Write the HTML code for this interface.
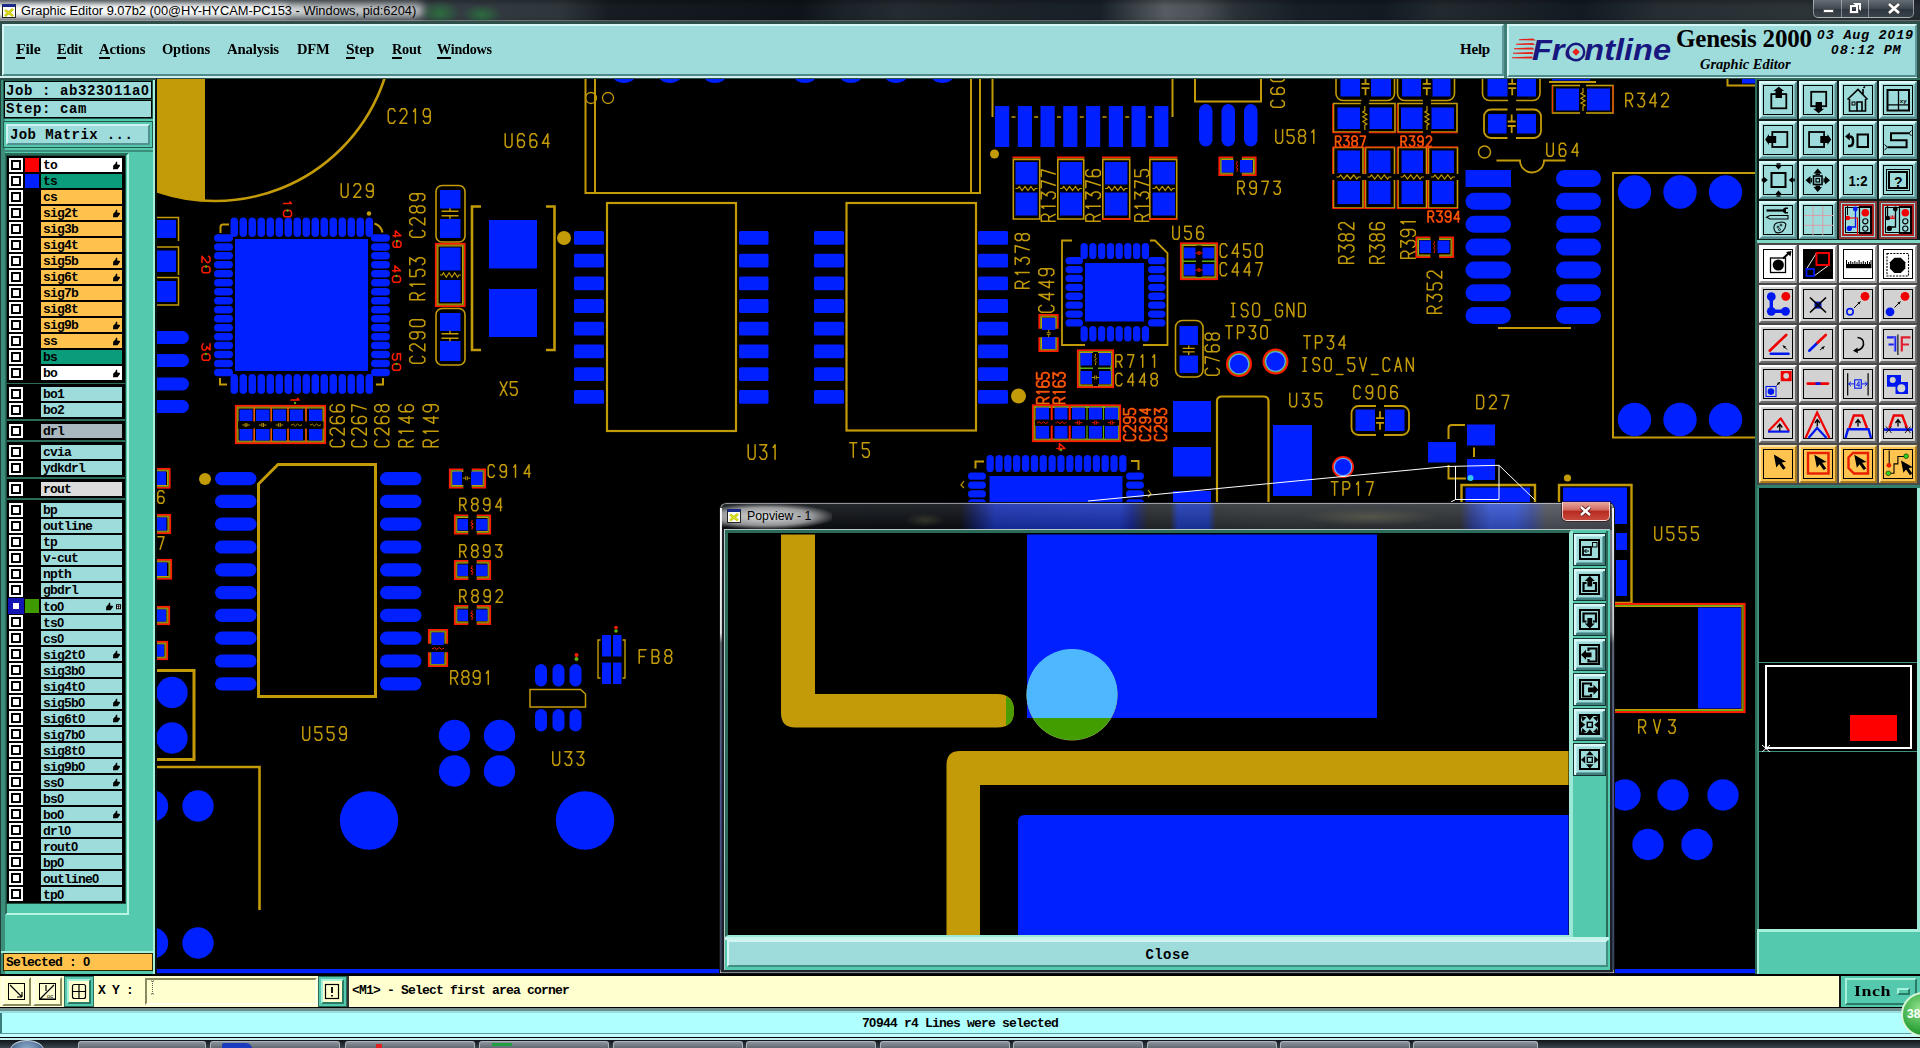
<!DOCTYPE html>
<html><head><meta charset="utf-8"><title>Graphic Editor</title><style>
html,body{margin:0;padding:0;background:#000;}
body{width:1920px;height:1048px;position:relative;overflow:hidden;font-family:'Liberation Sans', sans-serif;}
div{position:absolute;box-sizing:border-box;}
svg{position:absolute;left:0;top:0;}
.m{font-family:'Liberation Mono', monospace;font-weight:bold;color:#000;white-space:pre;}
.s{font-family:'Liberation Serif', serif;font-weight:bold;color:#000;white-space:pre;}
.row{left:7px;width:118px;height:16px;background:#000;}
.cb{left:2px;top:1px;width:14px;height:14px;background:#fff;border:2px solid #fff;}
.cb i{position:absolute;left:0;top:0;width:10px;height:10px;border:2px solid #000;box-sizing:border-box;display:block;}
.cc{left:18px;top:1px;width:14px;height:14px;}
.nm{left:34px;top:1px;width:81px;height:14px;font-family:'Liberation Mono', monospace;font-weight:bold;font-size:13px;letter-spacing:-0.8px;line-height:13px;padding-left:2px;padding-top:1px;color:#000;white-space:pre;overflow:hidden;}
.tb{width:38px;height:38px;background:#9edbdb;border-style:solid;border-width:2px;border-color:#dcfafa #5a8e8e #5a8e8e #dcfafa;box-shadow:inset 1px 1px 0 #c4eeee,inset -1px -1px 0 #7ab4b4;}
.tb b{position:absolute;left:2px;top:2px;width:30px;height:30px;border:1px solid #000;display:block;box-sizing:border-box;}
.gb{width:38px;height:38px;background:#d2d2d2;border-style:solid;border-width:2px;border-color:#fff #6a6a6a #6a6a6a #fff;}
.gb b{position:absolute;left:2px;top:2px;width:30px;height:30px;border:1px solid #000;display:block;box-sizing:border-box;}
.wb{width:38px;height:38px;background:#fff;border-style:solid;border-width:2px;border-color:#fff #9a9a9a #9a9a9a #fff;}
.wb b{position:absolute;left:2px;top:2px;width:30px;height:30px;border:1px solid #000;display:block;box-sizing:border-box;}
.ob{width:38px;height:38px;background:#ffc44f;border-style:solid;border-width:2px;border-color:#ffe6a8 #a87a20 #a87a20 #ffe6a8;}
.ob b{position:absolute;left:2px;top:2px;width:30px;height:30px;border:1px solid #000;display:block;box-sizing:border-box;}
.rb{width:38px;height:38px;background:#9edbdb;border:2px solid #8a3a3a;}
.rb b{position:absolute;left:1px;top:1px;width:32px;height:32px;border:2px solid #b02020;display:block;box-sizing:border-box;}
.pb{width:33px;height:33px;background:#9edbdb;border:1px solid #16332e;box-shadow:inset 2px 2px 0 #d8f8f8,inset -2px -2px 0 #3f7f7f,inset 3px 3px 0 #b8e8e8,inset -3px -3px 0 #6aa8a8;}
.pb b{position:absolute;left:5px;top:5px;width:21px;height:21px;border:2px solid #000;display:block;box-sizing:border-box;}
</style></head><body>
<svg width="1920" height="1048" viewBox="0 0 1920 1048" style="left:0;top:0" shape-rendering="geometricPrecision"><defs><clipPath id="pc"><rect x="157" y="79" width="1598.5" height="896"/></clipPath></defs><g clip-path="url(#pc)"><path d="M157 70 H205 V200.7 A178.5 178.5 0 0 1 157 191.5 Z" stroke="#c39b08" stroke-width="0" fill="#c39b08" />
<circle cx="215" cy="22.5" r="178.5" stroke="#c39b08" stroke-width="2.6" fill="none"/>
<path d="M6.9 2.4 L5.2 0 L1.7 0 L0 2.4 L0 12.1 L1.7 14.5 L5.2 14.5 L6.9 12.1 M11.7 2.4 L13.4 0 L16.9 0 L18.6 2.4 L18.6 5.3 L11.7 14.5 L18.6 14.5 M25.3 2.7 L27.2 0 L27.2 14.5 M42 5.8 L40.3 8 L36.8 8 L35.1 5.8 L35.1 2.4 L36.8 0 L40.3 0 L42 2.4 L42 12.1 L40.3 14.5 L36.8 14.5 L35.1 12.1" transform="translate(388.2 108.8)" stroke="#c39b08" stroke-width="1.5" fill="none" stroke-linejoin="round" stroke-linecap="round"/>
<path d="M0 0 L0 11.2 L1.7 13.5 L5.1 13.5 L6.8 11.2 L6.8 0 M19.2 2.2 L17.5 0 L14.1 0 L12.4 2.2 L12.4 11.2 L14.1 13.5 L17.5 13.5 L19.2 11.2 L19.2 8.1 L17.5 6.1 L14.1 6.1 L12.4 8.1 M31.6 2.2 L29.9 0 L26.5 0 L24.8 2.2 L24.8 11.2 L26.5 13.5 L29.9 13.5 L31.6 11.2 L31.6 8.1 L29.9 6.1 L26.5 6.1 L24.8 8.1 M42.6 13.5 L42.6 0 L37.2 9.5 L44 9.5" transform="translate(505.2 133.8)" stroke="#c39b08" stroke-width="1.5" fill="none" stroke-linejoin="round" stroke-linecap="round"/>
<path d="M0 0 L0 11.2 L1.7 13.5 L5.1 13.5 L6.8 11.2 L6.8 0 M12.6 2.2 L14.3 0 L17.7 0 L19.4 2.2 L19.4 5 L12.6 13.5 L19.4 13.5 M32 5.4 L30.3 7.4 L26.9 7.4 L25.2 5.4 L25.2 2.2 L26.9 0 L30.3 0 L32 2.2 L32 11.2 L30.3 13.5 L26.9 13.5 L25.2 11.2" transform="translate(341.2 183.8)" stroke="#c39b08" stroke-width="1.5" fill="none" stroke-linejoin="round" stroke-linecap="round"/>
<path d="M6.9 2.5 L5.2 0 L1.7 0 L0 2.5 L0 12.5 L1.7 15 L5.2 15 L6.9 12.5 M12.2 2.5 L13.9 0 L17.4 0 L19.1 2.5 L19.1 5.5 L12.2 15 L19.1 15 M26.1 0 L29.6 0 L31.3 2.5 L31.3 5 L29.6 7 L26.1 7 L24.4 5 L24.4 2.5 L26.1 0 M26.1 7 L24.4 9.2 L24.4 12.5 L26.1 15 L29.6 15 L31.3 12.5 L31.3 9.2 L29.6 7 M43.5 6 L41.8 8.2 L38.3 8.2 L36.6 6 L36.6 2.5 L38.3 0 L41.8 0 L43.5 2.5 L43.5 12.5 L41.8 15 L38.3 15 L36.6 12.5" transform="translate(409.8 237.2) rotate(-90)" stroke="#c39b08" stroke-width="1.5" fill="none" stroke-linejoin="round" stroke-linecap="round"/>
<path d="M0 15 L0 0 L5.2 0 L6.9 2.5 L6.9 5.5 L5.2 8 L0 8 M3.5 8 L6.9 15 M13.6 2.8 L15.5 0 L15.5 15 M30.3 0 L23.4 0 L23.4 6.2 L28.6 6.2 L30.3 8.8 L30.3 12.5 L28.6 15 L25.1 15 L23.4 12.5 M35.1 0 L42 0 L38.2 6.2 L40.3 6.2 L42 8.8 L42 12.5 L40.3 15 L36.8 15 L35.1 12.5" transform="translate(409.8 299.8) rotate(-90)" stroke="#c39b08" stroke-width="1.5" fill="none" stroke-linejoin="round" stroke-linecap="round"/>
<path d="M6.9 2.5 L5.2 0 L1.7 0 L0 2.5 L0 12.5 L1.7 15 L5.2 15 L6.9 12.5 M12.2 2.5 L13.9 0 L17.4 0 L19.1 2.5 L19.1 5.5 L12.2 15 L19.1 15 M31.3 6 L29.6 8.2 L26.1 8.2 L24.4 6 L24.4 2.5 L26.1 0 L29.6 0 L31.3 2.5 L31.3 12.5 L29.6 15 L26.1 15 L24.4 12.5 M38.3 0 L41.8 0 L43.5 2.5 L43.5 12.5 L41.8 15 L38.3 15 L36.6 12.5 L36.6 2.5 L38.3 0" transform="translate(409.8 363.2) rotate(-90)" stroke="#c39b08" stroke-width="1.5" fill="none" stroke-linejoin="round" stroke-linecap="round"/>
<rect x="157" y="220" width="19" height="18" fill="#0020ff"/>
<rect x="157" y="250.5" width="19" height="21.5" fill="#0020ff"/>
<rect x="157" y="281" width="19" height="21" fill="#0020ff"/>
<path d="M157 217.5 H178.5 V241 M157 247 H178.5 V275 M157 277.5 H178.5 V305 H157" stroke="#c39b08" stroke-width="1.5" fill="none" />
<rect x="150" y="331" width="39" height="13" rx="6.5" fill="#0020ff"/>
<rect x="150" y="354" width="39" height="13" rx="6.5" fill="#0020ff"/>
<rect x="150" y="377.5" width="39" height="13" rx="6.5" fill="#0020ff"/>
<rect x="150" y="400" width="39" height="13" rx="6.5" fill="#0020ff"/>
<rect x="235" y="239" width="133" height="132" fill="#0020ff"/>
<rect x="230.5" y="217.5" width="7.5" height="19.5" rx="3.8" fill="#0020ff"/>
<rect x="230.5" y="374" width="7.5" height="20" rx="3.8" fill="#0020ff"/>
<rect x="239.5" y="217.5" width="7.5" height="19.5" rx="3.8" fill="#0020ff"/>
<rect x="239.5" y="374" width="7.5" height="20" rx="3.8" fill="#0020ff"/>
<rect x="248.5" y="217.5" width="7.5" height="19.5" rx="3.8" fill="#0020ff"/>
<rect x="248.5" y="374" width="7.5" height="20" rx="3.8" fill="#0020ff"/>
<rect x="257.5" y="217.5" width="7.5" height="19.5" rx="3.8" fill="#0020ff"/>
<rect x="257.5" y="374" width="7.5" height="20" rx="3.8" fill="#0020ff"/>
<rect x="266.5" y="217.5" width="7.5" height="19.5" rx="3.8" fill="#0020ff"/>
<rect x="266.5" y="374" width="7.5" height="20" rx="3.8" fill="#0020ff"/>
<rect x="275.5" y="217.5" width="7.5" height="19.5" rx="3.8" fill="#0020ff"/>
<rect x="275.5" y="374" width="7.5" height="20" rx="3.8" fill="#0020ff"/>
<rect x="284.5" y="217.5" width="7.5" height="19.5" rx="3.8" fill="#0020ff"/>
<rect x="284.5" y="374" width="7.5" height="20" rx="3.8" fill="#0020ff"/>
<rect x="293.5" y="217.5" width="7.5" height="19.5" rx="3.8" fill="#0020ff"/>
<rect x="293.5" y="374" width="7.5" height="20" rx="3.8" fill="#0020ff"/>
<rect x="302.5" y="217.5" width="7.5" height="19.5" rx="3.8" fill="#0020ff"/>
<rect x="302.5" y="374" width="7.5" height="20" rx="3.8" fill="#0020ff"/>
<rect x="311.5" y="217.5" width="7.5" height="19.5" rx="3.8" fill="#0020ff"/>
<rect x="311.5" y="374" width="7.5" height="20" rx="3.8" fill="#0020ff"/>
<rect x="320.5" y="217.5" width="7.5" height="19.5" rx="3.8" fill="#0020ff"/>
<rect x="320.5" y="374" width="7.5" height="20" rx="3.8" fill="#0020ff"/>
<rect x="329.5" y="217.5" width="7.5" height="19.5" rx="3.8" fill="#0020ff"/>
<rect x="329.5" y="374" width="7.5" height="20" rx="3.8" fill="#0020ff"/>
<rect x="338.5" y="217.5" width="7.5" height="19.5" rx="3.8" fill="#0020ff"/>
<rect x="338.5" y="374" width="7.5" height="20" rx="3.8" fill="#0020ff"/>
<rect x="347.5" y="217.5" width="7.5" height="19.5" rx="3.8" fill="#0020ff"/>
<rect x="347.5" y="374" width="7.5" height="20" rx="3.8" fill="#0020ff"/>
<rect x="356.5" y="217.5" width="7.5" height="19.5" rx="3.8" fill="#0020ff"/>
<rect x="356.5" y="374" width="7.5" height="20" rx="3.8" fill="#0020ff"/>
<rect x="365.5" y="217.5" width="7.5" height="19.5" rx="3.8" fill="#0020ff"/>
<rect x="365.5" y="374" width="7.5" height="20" rx="3.8" fill="#0020ff"/>
<rect x="214" y="234.2" width="19" height="7.5" rx="3.8" fill="#0020ff"/>
<rect x="371" y="234.2" width="19" height="7.5" rx="3.8" fill="#0020ff"/>
<rect x="214" y="243.2" width="19" height="7.5" rx="3.8" fill="#0020ff"/>
<rect x="371" y="243.2" width="19" height="7.5" rx="3.8" fill="#0020ff"/>
<rect x="214" y="252.1" width="19" height="7.5" rx="3.8" fill="#0020ff"/>
<rect x="371" y="252.1" width="19" height="7.5" rx="3.8" fill="#0020ff"/>
<rect x="214" y="261.1" width="19" height="7.5" rx="3.8" fill="#0020ff"/>
<rect x="371" y="261.1" width="19" height="7.5" rx="3.8" fill="#0020ff"/>
<rect x="214" y="270.1" width="19" height="7.5" rx="3.8" fill="#0020ff"/>
<rect x="371" y="270.1" width="19" height="7.5" rx="3.8" fill="#0020ff"/>
<rect x="214" y="279.1" width="19" height="7.5" rx="3.8" fill="#0020ff"/>
<rect x="371" y="279.1" width="19" height="7.5" rx="3.8" fill="#0020ff"/>
<rect x="214" y="288" width="19" height="7.5" rx="3.8" fill="#0020ff"/>
<rect x="371" y="288" width="19" height="7.5" rx="3.8" fill="#0020ff"/>
<rect x="214" y="297" width="19" height="7.5" rx="3.8" fill="#0020ff"/>
<rect x="371" y="297" width="19" height="7.5" rx="3.8" fill="#0020ff"/>
<rect x="214" y="306" width="19" height="7.5" rx="3.8" fill="#0020ff"/>
<rect x="371" y="306" width="19" height="7.5" rx="3.8" fill="#0020ff"/>
<rect x="214" y="314.9" width="19" height="7.5" rx="3.8" fill="#0020ff"/>
<rect x="371" y="314.9" width="19" height="7.5" rx="3.8" fill="#0020ff"/>
<rect x="214" y="323.9" width="19" height="7.5" rx="3.8" fill="#0020ff"/>
<rect x="371" y="323.9" width="19" height="7.5" rx="3.8" fill="#0020ff"/>
<rect x="214" y="332.9" width="19" height="7.5" rx="3.8" fill="#0020ff"/>
<rect x="371" y="332.9" width="19" height="7.5" rx="3.8" fill="#0020ff"/>
<rect x="214" y="341.8" width="19" height="7.5" rx="3.8" fill="#0020ff"/>
<rect x="371" y="341.8" width="19" height="7.5" rx="3.8" fill="#0020ff"/>
<rect x="214" y="350.8" width="19" height="7.5" rx="3.8" fill="#0020ff"/>
<rect x="371" y="350.8" width="19" height="7.5" rx="3.8" fill="#0020ff"/>
<rect x="214" y="359.8" width="19" height="7.5" rx="3.8" fill="#0020ff"/>
<rect x="371" y="359.8" width="19" height="7.5" rx="3.8" fill="#0020ff"/>
<rect x="214" y="368.8" width="19" height="7.5" rx="3.8" fill="#0020ff"/>
<rect x="371" y="368.8" width="19" height="7.5" rx="3.8" fill="#0020ff"/>
<path d="M220.5 233 V227 Q220.5 224.5 223 224.5 H229 M220 378 V384.5 H227 M383 378 V384.5 H376" stroke="#c39b08" stroke-width="2" fill="none" />
<path d="M374.5 223.5 Q381 225.5 382.5 232.5" stroke="#c39b08" stroke-width="2" fill="none" />
<circle cx="369" cy="213.5" r="2.2" fill="#c39b08"/>
<path d="M1.7 1.5 L3.4 0 L3.4 8 M11.9 0 L15 0 L16.5 1.3 L16.5 6.7 L15 8 L11.9 8 L10.3 6.7 L10.3 1.3 L11.9 0" transform="translate(291.5 200.2) rotate(90)" stroke="#ff1a00" stroke-width="1.5" fill="none" stroke-linejoin="round" stroke-linecap="round"/>
<circle cx="287.5" cy="210.5" r="1.2" fill="#5fae10"/>
<path d="M0 1.3 L1.6 0 L4.7 0 L6.2 1.3 L6.2 2.9 L0 8 L6.2 8 M11.9 0 L15 0 L16.5 1.3 L16.5 6.7 L15 8 L11.9 8 L10.3 6.7 L10.3 1.3 L11.9 0" transform="translate(210 256.2) rotate(90)" stroke="#ff1a00" stroke-width="1.5" fill="none" stroke-linejoin="round" stroke-linecap="round"/>
<circle cx="206" cy="266.5" r="1.2" fill="#5fae10"/>
<path d="M5 8 L5 0 L0 5.6 L6.2 5.6 M16.5 3.2 L15 4.4 L11.9 4.4 L10.3 3.2 L10.3 1.3 L11.9 0 L15 0 L16.5 1.3 L16.5 6.7 L15 8 L11.9 8 L10.3 6.7" transform="translate(401 230.8) rotate(90)" stroke="#ff1a00" stroke-width="1.5" fill="none" stroke-linejoin="round" stroke-linecap="round"/>
<circle cx="397" cy="241" r="1.2" fill="#5fae10"/>
<path d="M5 8 L5 0 L0 5.6 L6.2 5.6 M11.9 0 L15 0 L16.5 1.3 L16.5 6.7 L15 8 L11.9 8 L10.3 6.7 L10.3 1.3 L11.9 0" transform="translate(400.5 265.8) rotate(90)" stroke="#ff1a00" stroke-width="1.5" fill="none" stroke-linejoin="round" stroke-linecap="round"/>
<circle cx="396.5" cy="276" r="1.2" fill="#5fae10"/>
<path d="M0 0 L6.2 0 L2.8 3.3 L4.7 3.3 L6.2 4.7 L6.2 6.7 L4.7 8 L1.6 8 L0 6.7 M11.9 0 L15 0 L16.5 1.3 L16.5 6.7 L15 8 L11.9 8 L10.3 6.7 L10.3 1.3 L11.9 0" transform="translate(210 343.8) rotate(90)" stroke="#ff1a00" stroke-width="1.5" fill="none" stroke-linejoin="round" stroke-linecap="round"/>
<circle cx="206" cy="354" r="1.2" fill="#5fae10"/>
<path d="M6.2 0 L0 0 L0 3.3 L4.7 3.3 L6.2 4.7 L6.2 6.7 L4.7 8 L1.6 8 L0 6.7 M11.9 0 L15 0 L16.5 1.3 L16.5 6.7 L15 8 L11.9 8 L10.3 6.7 L10.3 1.3 L11.9 0" transform="translate(400.5 353.8) rotate(90)" stroke="#ff1a00" stroke-width="1.5" fill="none" stroke-linejoin="round" stroke-linecap="round"/>
<circle cx="396.5" cy="364" r="1.2" fill="#5fae10"/>
<path d="M1.7 1.5 L3.4 0 L3.4 8" transform="translate(299 396.5) rotate(90)" stroke="#ff1a00" stroke-width="1.5" fill="none" stroke-linejoin="round" stroke-linecap="round"/>
<circle cx="295" cy="403" r="1.2" fill="#5fae10"/>
<rect x="436" y="185.5" width="29" height="56.5" rx="6" fill="none" stroke="#c39b08" stroke-width="1.6"/>
<rect x="440" y="190" width="20.5" height="18.5" fill="#0020ff"/>
<rect x="440" y="219" width="20.5" height="19" fill="#0020ff"/>
<rect x="438" y="209.5" width="25" height="8" fill="#000"/>
<path d="M441.5 211.2 H458.5 M441.5 215.8 H458.5 M450 208.2 V211.2 M450 215.8 V218.8" stroke="#c39b08" stroke-width="1.4" fill="none" />
<rect x="436" y="244" width="28.5" height="62" fill="none" stroke="#ff1a00" stroke-width="2.2"/>
<rect x="437.2" y="245.2" width="26.1" height="59.6" fill="none" stroke="#5fae10" stroke-width="1"/>
<rect x="438" y="246" width="24.5" height="58" fill="none" stroke="#c39b08" stroke-width="1"/>
<rect x="440" y="247.5" width="20.5" height="23" fill="#0020ff"/>
<rect x="440" y="280" width="20.5" height="22" fill="#0020ff"/>
<rect x="440" y="271" width="20.5" height="8.5" fill="#000"/>
<path d="M440 275 L442.1 275 L443.5 272.8 L446.3 277.2 L449.1 272.8 L451.9 277.2 L454.7 272.8 L457.5 277.2 L458.9 275 L461 275" stroke="#c39b08" stroke-width="1.2" fill="none" />
<rect x="436" y="308.5" width="29" height="56.5" rx="6" fill="none" stroke="#c39b08" stroke-width="1.6"/>
<rect x="440" y="313" width="20.5" height="18" fill="#0020ff"/>
<rect x="440" y="341" width="20.5" height="20" fill="#0020ff"/>
<rect x="438" y="332" width="25" height="8" fill="#000"/>
<path d="M441.5 333.8 H458.5 M441.5 338.2 H458.5 M450 330.8 V333.8 M450 338.2 V341.2" stroke="#c39b08" stroke-width="1.4" fill="none" />
<path d="M481 206.5 H472 V350 H481 M546 206.5 H554.5 V350 H546" stroke="#c39b08" stroke-width="2.6" fill="none" />
<rect x="489" y="220" width="48" height="48.5" fill="#0020ff"/>
<rect x="489" y="289" width="48" height="48" fill="#0020ff"/>
<path d="M0 0 L6.8 13.5 M6.8 0 L0 13.5 M17 0 L10.2 0 L10.2 5.6 L15.3 5.6 L17 7.9 L17 11.2 L15.3 13.5 L11.9 13.5 L10.2 11.2" transform="translate(500.2 381.8)" stroke="#c39b08" stroke-width="1.5" fill="none" stroke-linejoin="round" stroke-linecap="round"/>
<circle cx="564" cy="238" r="7" fill="#c39b08"/>
<rect x="574" y="231" width="30" height="13.8" rx="1.5" fill="#0020ff"/>
<rect x="739" y="231" width="29.5" height="13.8" rx="1.5" fill="#0020ff"/>
<rect x="814" y="231" width="30" height="13.8" rx="1.5" fill="#0020ff"/>
<rect x="978" y="231" width="30" height="13.8" rx="1.5" fill="#0020ff"/>
<rect x="574" y="253.7" width="30" height="13.8" rx="1.5" fill="#0020ff"/>
<rect x="739" y="253.7" width="29.5" height="13.8" rx="1.5" fill="#0020ff"/>
<rect x="814" y="253.7" width="30" height="13.8" rx="1.5" fill="#0020ff"/>
<rect x="978" y="253.7" width="30" height="13.8" rx="1.5" fill="#0020ff"/>
<rect x="574" y="276.4" width="30" height="13.8" rx="1.5" fill="#0020ff"/>
<rect x="739" y="276.4" width="29.5" height="13.8" rx="1.5" fill="#0020ff"/>
<rect x="814" y="276.4" width="30" height="13.8" rx="1.5" fill="#0020ff"/>
<rect x="978" y="276.4" width="30" height="13.8" rx="1.5" fill="#0020ff"/>
<rect x="574" y="299.1" width="30" height="13.8" rx="1.5" fill="#0020ff"/>
<rect x="739" y="299.1" width="29.5" height="13.8" rx="1.5" fill="#0020ff"/>
<rect x="814" y="299.1" width="30" height="13.8" rx="1.5" fill="#0020ff"/>
<rect x="978" y="299.1" width="30" height="13.8" rx="1.5" fill="#0020ff"/>
<rect x="574" y="321.8" width="30" height="13.8" rx="1.5" fill="#0020ff"/>
<rect x="739" y="321.8" width="29.5" height="13.8" rx="1.5" fill="#0020ff"/>
<rect x="814" y="321.8" width="30" height="13.8" rx="1.5" fill="#0020ff"/>
<rect x="978" y="321.8" width="30" height="13.8" rx="1.5" fill="#0020ff"/>
<rect x="574" y="344.5" width="30" height="13.8" rx="1.5" fill="#0020ff"/>
<rect x="739" y="344.5" width="29.5" height="13.8" rx="1.5" fill="#0020ff"/>
<rect x="814" y="344.5" width="30" height="13.8" rx="1.5" fill="#0020ff"/>
<rect x="978" y="344.5" width="30" height="13.8" rx="1.5" fill="#0020ff"/>
<rect x="574" y="367.2" width="30" height="13.8" rx="1.5" fill="#0020ff"/>
<rect x="739" y="367.2" width="29.5" height="13.8" rx="1.5" fill="#0020ff"/>
<rect x="814" y="367.2" width="30" height="13.8" rx="1.5" fill="#0020ff"/>
<rect x="978" y="367.2" width="30" height="13.8" rx="1.5" fill="#0020ff"/>
<rect x="574" y="389.9" width="30" height="13.8" rx="1.5" fill="#0020ff"/>
<rect x="739" y="389.9" width="29.5" height="13.8" rx="1.5" fill="#0020ff"/>
<rect x="814" y="389.9" width="30" height="13.8" rx="1.5" fill="#0020ff"/>
<rect x="978" y="389.9" width="30" height="13.8" rx="1.5" fill="#0020ff"/>
<rect x="607" y="203" width="129" height="228" fill="none" stroke="#c39b08" stroke-width="2.2"/>
<rect x="846.5" y="203" width="129.5" height="227.5" fill="none" stroke="#c39b08" stroke-width="2.2"/>
<path d="M0 0 L0 12.1 L1.7 14.5 L5.2 14.5 L6.9 12.1 L6.9 0 M11.6 0 L18.5 0 L14.7 6 L16.7 6 L18.5 8.5 L18.5 12.1 L16.7 14.5 L13.3 14.5 L11.6 12.1 M25 2.7 L26.9 0 L26.9 14.5" transform="translate(748.2 444.8)" stroke="#c39b08" stroke-width="1.5" fill="none" stroke-linejoin="round" stroke-linecap="round"/>
<path d="M0 0 L6.9 0 M3.5 0 L3.5 14.5 M19.5 0 L12.6 0 L12.6 6 L17.8 6 L19.5 8.5 L19.5 12.1 L17.8 14.5 L14.3 14.5 L12.6 12.1" transform="translate(849.8 442.8)" stroke="#c39b08" stroke-width="1.5" fill="none" stroke-linejoin="round" stroke-linecap="round"/>
<path d="M585.5 78 V193 H980 V78 M595 78 V193 M971 78 V193" stroke="#c39b08" stroke-width="2" fill="none" />
<circle cx="591" cy="98" r="5.5" fill="none" stroke="#c39b08" stroke-width="1.3"/>
<circle cx="608" cy="98" r="5.5" fill="none" stroke="#c39b08" stroke-width="1.3"/>
<ellipse cx="624" cy="76" rx="11" ry="7" fill="#0020ff"/>
<ellipse cx="670" cy="76" rx="11" ry="7" fill="#0020ff"/>
<ellipse cx="715" cy="76" rx="11" ry="7" fill="#0020ff"/>
<ellipse cx="805" cy="76" rx="11" ry="7" fill="#0020ff"/>
<ellipse cx="851" cy="76" rx="11" ry="7" fill="#0020ff"/>
<ellipse cx="896" cy="76" rx="11" ry="7" fill="#0020ff"/>
<ellipse cx="942.5" cy="76" rx="11" ry="7" fill="#0020ff"/>
<rect x="236" y="406" width="89" height="37" fill="none" stroke="#ff1a00" stroke-width="2.2"/>
<rect x="237.2" y="407.2" width="86.6" height="34.6" fill="none" stroke="#5fae10" stroke-width="1"/>
<rect x="238" y="408" width="85" height="33" fill="none" stroke="#c39b08" stroke-width="1"/>
<rect x="239.5" y="409.5" width="13" height="11.5" fill="#0020ff"/>
<rect x="239.5" y="429" width="13" height="11.5" fill="#0020ff"/>
<rect x="256" y="409.5" width="13.5" height="11.5" fill="#0020ff"/>
<rect x="256" y="429" width="13.5" height="11.5" fill="#0020ff"/>
<rect x="273" y="409.5" width="13" height="11.5" fill="#0020ff"/>
<rect x="273" y="429" width="13" height="11.5" fill="#0020ff"/>
<rect x="290" y="409.5" width="13" height="11.5" fill="#0020ff"/>
<rect x="290" y="429" width="13" height="11.5" fill="#0020ff"/>
<rect x="309" y="409.5" width="13" height="11.5" fill="#0020ff"/>
<rect x="309" y="429" width="13" height="11.5" fill="#0020ff"/>
<path d="M254.2 407 V442" stroke="#ff1a00" stroke-width="1.6" fill="none" />
<path d="M254.2 407 V442" stroke="#c39b08" stroke-width="0.8" fill="none" />
<path d="M271.2 407 V442" stroke="#ff1a00" stroke-width="1.6" fill="none" />
<path d="M271.2 407 V442" stroke="#c39b08" stroke-width="0.8" fill="none" />
<path d="M288 407 V442" stroke="#ff1a00" stroke-width="1.6" fill="none" />
<path d="M288 407 V442" stroke="#c39b08" stroke-width="0.8" fill="none" />
<path d="M306 407 V442" stroke="#ff1a00" stroke-width="1.6" fill="none" />
<path d="M306 407 V442" stroke="#c39b08" stroke-width="0.8" fill="none" />
<rect x="238" y="421.5" width="85.5" height="7" fill="#000"/>
<path d="M245.2 423 V427 M246.8 423 V427 M242.2 425 H245.2 M246.8 425 H249.8" stroke="#c39b08" stroke-width="0.9" fill="none" />
<path d="M261.9 423 V427 M263.5 423 V427 M258.9 425 H261.9 M263.5 425 H266.5" stroke="#c39b08" stroke-width="0.9" fill="none" />
<path d="M278.7 423 V427 M280.3 423 V427 M275.7 425 H278.7 M280.3 425 H283.3" stroke="#c39b08" stroke-width="0.9" fill="none" />
<path d="M291 425 L292.1 425 L293.2 424 L295.4 426 L297.6 424 L299.8 426 L300.9 425 L302 425" stroke="#c39b08" stroke-width="0.9" fill="none" />
<path d="M310 425 L311.1 425 L312.2 424 L314.4 426 L316.6 424 L318.8 426 L319.9 425 L321 425" stroke="#c39b08" stroke-width="0.9" fill="none" />
<path d="M6.9 2.3 L5.2 0 L1.7 0 L0 2.3 L0 11.7 L1.7 14 L5.2 14 L6.9 11.7 M11.7 2.3 L13.4 0 L16.9 0 L18.6 2.3 L18.6 5.1 L11.7 14 L18.6 14 M30.3 2.3 L28.6 0 L25.1 0 L23.4 2.3 L23.4 11.7 L25.1 14 L28.6 14 L30.3 11.7 L30.3 8.4 L28.6 6.3 L25.1 6.3 L23.4 8.4 M42 2.3 L40.3 0 L36.8 0 L35.1 2.3 L35.1 11.7 L36.8 14 L40.3 14 L42 11.7 L42 8.4 L40.3 6.3 L36.8 6.3 L35.1 8.4" transform="translate(330.2 446.8) rotate(-90)" stroke="#c39b08" stroke-width="1.5" fill="none" stroke-linejoin="round" stroke-linecap="round"/>
<path d="M6.9 2.4 L5.2 0 L1.7 0 L0 2.4 L0 12.1 L1.7 14.5 L5.2 14.5 L6.9 12.1 M11.7 2.4 L13.4 0 L16.9 0 L18.6 2.4 L18.6 5.3 L11.7 14.5 L18.6 14.5 M30.3 2.4 L28.6 0 L25.1 0 L23.4 2.4 L23.4 12.1 L25.1 14.5 L28.6 14.5 L30.3 12.1 L30.3 8.7 L28.6 6.5 L25.1 6.5 L23.4 8.7 M35.1 0 L42 0 L37.7 14.5" transform="translate(351.8 446.8) rotate(-90)" stroke="#c39b08" stroke-width="1.5" fill="none" stroke-linejoin="round" stroke-linecap="round"/>
<path d="M6.9 2.3 L5.2 0 L1.7 0 L0 2.3 L0 11.7 L1.7 14 L5.2 14 L6.9 11.7 M11.7 2.3 L13.4 0 L16.9 0 L18.6 2.3 L18.6 5.1 L11.7 14 L18.6 14 M30.3 2.3 L28.6 0 L25.1 0 L23.4 2.3 L23.4 11.7 L25.1 14 L28.6 14 L30.3 11.7 L30.3 8.4 L28.6 6.3 L25.1 6.3 L23.4 8.4 M36.8 0 L40.3 0 L42 2.3 L42 4.7 L40.3 6.5 L36.8 6.5 L35.1 4.7 L35.1 2.3 L36.8 0 M36.8 6.5 L35.1 8.6 L35.1 11.7 L36.8 14 L40.3 14 L42 11.7 L42 8.6 L40.3 6.5" transform="translate(374.8 446.8) rotate(-90)" stroke="#c39b08" stroke-width="1.5" fill="none" stroke-linejoin="round" stroke-linecap="round"/>
<path d="M0 14.5 L0 0 L5.2 0 L6.9 2.4 L6.9 5.3 L5.2 7.7 L0 7.7 M3.5 7.7 L6.9 14.5 M13.6 2.7 L15.5 0 L15.5 14.5 M28.9 14.5 L28.9 0 L23.4 10.2 L30.3 10.2 M42 2.4 L40.3 0 L36.8 0 L35.1 2.4 L35.1 12.1 L36.8 14.5 L40.3 14.5 L42 12.1 L42 8.7 L40.3 6.5 L36.8 6.5 L35.1 8.7" transform="translate(398.8 446.8) rotate(-90)" stroke="#c39b08" stroke-width="1.5" fill="none" stroke-linejoin="round" stroke-linecap="round"/>
<path d="M0 15 L0 0 L5.2 0 L6.9 2.5 L6.9 5.5 L5.2 8 L0 8 M3.5 8 L6.9 15 M13.6 2.8 L15.5 0 L15.5 15 M28.9 15 L28.9 0 L23.4 10.5 L30.3 10.5 M42 6 L40.3 8.2 L36.8 8.2 L35.1 6 L35.1 2.5 L36.8 0 L40.3 0 L42 2.5 L42 12.5 L40.3 15 L36.8 15 L35.1 12.5" transform="translate(423.2 446.8) rotate(-90)" stroke="#c39b08" stroke-width="1.5" fill="none" stroke-linejoin="round" stroke-linecap="round"/>
<rect x="215" y="472" width="41.5" height="13.2" rx="6.6" fill="#0020ff"/>
<rect x="380" y="472" width="41.5" height="13.2" rx="6.6" fill="#0020ff"/>
<rect x="215" y="494.8" width="41.5" height="13.2" rx="6.6" fill="#0020ff"/>
<rect x="380" y="494.8" width="41.5" height="13.2" rx="6.6" fill="#0020ff"/>
<rect x="215" y="517.6" width="41.5" height="13.2" rx="6.6" fill="#0020ff"/>
<rect x="380" y="517.6" width="41.5" height="13.2" rx="6.6" fill="#0020ff"/>
<rect x="215" y="540.4" width="41.5" height="13.2" rx="6.6" fill="#0020ff"/>
<rect x="380" y="540.4" width="41.5" height="13.2" rx="6.6" fill="#0020ff"/>
<rect x="215" y="563.2" width="41.5" height="13.2" rx="6.6" fill="#0020ff"/>
<rect x="380" y="563.2" width="41.5" height="13.2" rx="6.6" fill="#0020ff"/>
<rect x="215" y="586" width="41.5" height="13.2" rx="6.6" fill="#0020ff"/>
<rect x="380" y="586" width="41.5" height="13.2" rx="6.6" fill="#0020ff"/>
<rect x="215" y="608.8" width="41.5" height="13.2" rx="6.6" fill="#0020ff"/>
<rect x="380" y="608.8" width="41.5" height="13.2" rx="6.6" fill="#0020ff"/>
<rect x="215" y="631.6" width="41.5" height="13.2" rx="6.6" fill="#0020ff"/>
<rect x="380" y="631.6" width="41.5" height="13.2" rx="6.6" fill="#0020ff"/>
<rect x="215" y="654.4" width="41.5" height="13.2" rx="6.6" fill="#0020ff"/>
<rect x="380" y="654.4" width="41.5" height="13.2" rx="6.6" fill="#0020ff"/>
<rect x="215" y="677.2" width="41.5" height="13.2" rx="6.6" fill="#0020ff"/>
<rect x="380" y="677.2" width="41.5" height="13.2" rx="6.6" fill="#0020ff"/>
<path d="M278 464.5 H375.5 V696.5 H258.5 V484 Z" stroke="#c39b08" stroke-width="3" fill="none" />
<circle cx="205" cy="479" r="6" fill="#c39b08"/>
<path d="M0 0 L0 11.2 L1.7 13.5 L5.1 13.5 L6.8 11.2 L6.8 0 M19 0 L12.2 0 L12.2 5.6 L17.3 5.6 L19 7.9 L19 11.2 L17.3 13.5 L13.9 13.5 L12.2 11.2 M31.2 0 L24.5 0 L24.5 5.6 L29.6 5.6 L31.2 7.9 L31.2 11.2 L29.6 13.5 L26.2 13.5 L24.5 11.2 M43.5 5.4 L41.8 7.4 L38.4 7.4 L36.8 5.4 L36.8 2.2 L38.4 0 L41.8 0 L43.5 2.2 L43.5 11.2 L41.8 13.5 L38.4 13.5 L36.8 11.2" transform="translate(302.8 726.8)" stroke="#c39b08" stroke-width="1.5" fill="none" stroke-linejoin="round" stroke-linecap="round"/>
<rect x="150" y="469" width="19.5" height="18.5" fill="none" stroke="#ff1a00" stroke-width="2.2"/>
<rect x="151.2" y="470.2" width="17.1" height="16.1" fill="none" stroke="#5fae10" stroke-width="1"/>
<rect x="152" y="471" width="15.5" height="14.5" fill="none" stroke="#c39b08" stroke-width="1"/>
<rect x="155" y="471.5" width="11" height="13.5" fill="#0020ff"/>
<path d="M6.2 2.1 L4.7 0 L1.6 0 L0 2.1 L0 10.4 L1.6 12.5 L4.7 12.5 L6.2 10.4 L6.2 7.5 L4.7 5.6 L1.6 5.6 L0 7.5" transform="translate(157.8 490.8)" stroke="#c39b08" stroke-width="1.5" fill="none" stroke-linejoin="round" stroke-linecap="round"/>
<rect x="150" y="515" width="20" height="18" fill="none" stroke="#ff1a00" stroke-width="2.2"/>
<rect x="151.2" y="516.2" width="17.6" height="15.6" fill="none" stroke="#5fae10" stroke-width="1"/>
<rect x="152" y="517" width="16" height="14" fill="none" stroke="#c39b08" stroke-width="1"/>
<rect x="155" y="517.5" width="11.5" height="13" fill="#0020ff"/>
<path d="M0 0 L6.2 0 L2.3 12.5" transform="translate(157.8 536.8)" stroke="#c39b08" stroke-width="1.5" fill="none" stroke-linejoin="round" stroke-linecap="round"/>
<rect x="150" y="560" width="21" height="18.5" fill="none" stroke="#ff1a00" stroke-width="2.2"/>
<rect x="151.2" y="561.2" width="18.6" height="16.1" fill="none" stroke="#5fae10" stroke-width="1"/>
<rect x="152" y="562" width="17" height="14.5" fill="none" stroke="#c39b08" stroke-width="1"/>
<rect x="155" y="562.5" width="12" height="13.5" fill="#0020ff"/>
<rect x="150" y="607" width="19" height="17" fill="none" stroke="#ff1a00" stroke-width="2.2"/>
<rect x="151.2" y="608.2" width="16.6" height="14.6" fill="none" stroke="#5fae10" stroke-width="1"/>
<rect x="152" y="609" width="15" height="13" fill="none" stroke="#c39b08" stroke-width="1"/>
<rect x="155" y="609.5" width="11" height="12" fill="#0020ff"/>
<rect x="150" y="642" width="17" height="17" fill="none" stroke="#ff1a00" stroke-width="2.2"/>
<rect x="151.2" y="643.2" width="14.6" height="14.6" fill="none" stroke="#5fae10" stroke-width="1"/>
<rect x="152" y="644" width="13" height="13" fill="none" stroke="#c39b08" stroke-width="1"/>
<rect x="155" y="644.5" width="9" height="12" fill="#0020ff"/>
<path d="M463.3 469.5 H450 V487.5 H463.3 M471.7 469.5 H485 V487.5 H471.7" stroke="#ff1a00" stroke-width="2.2" fill="none" />
<path d="M463.3 470.7 H451.2 V486.3 H463.3 M471.7 470.7 H483.8 V486.3 H471.7" stroke="#5fae10" stroke-width="1" fill="none" />
<path d="M463.3 471.5 H452 V485.5 H463.3 M471.7 471.5 H483 V485.5 H471.7" stroke="#c39b08" stroke-width="1" fill="none" />
<rect x="452.5" y="471.5" width="9.5" height="13.5" fill="#0020ff"/>
<rect x="471" y="471.5" width="11.5" height="13.5" fill="#0020ff"/>
<path d="M465.7 476.2 V480.2 M467.3 476.2 V480.2 M462.7 478.2 H465.7 M467.3 478.2 H470.3" stroke="#c39b08" stroke-width="0.9" fill="none" />
<path d="M6.2 2.1 L4.7 0 L1.6 0 L0 2.1 L0 10.4 L1.6 12.5 L4.7 12.5 L6.2 10.4 M18.2 5 L16.6 6.9 L13.5 6.9 L11.9 5 L11.9 2.1 L13.5 0 L16.6 0 L18.2 2.1 L18.2 10.4 L16.6 12.5 L13.5 12.5 L11.9 10.4 M25.6 2.3 L27.3 0 L27.3 12.5 M40.8 12.5 L40.8 0 L35.8 8.8 L42 8.8" transform="translate(488.2 464.8)" stroke="#c39b08" stroke-width="1.5" fill="none" stroke-linejoin="round" stroke-linecap="round"/>
<path d="M468.3 515.5 H455 V533.5 H468.3 M476.7 515.5 H490 V533.5 H476.7" stroke="#ff1a00" stroke-width="2.2" fill="none" />
<path d="M468.3 516.7 H456.2 V532.3 H468.3 M476.7 516.7 H488.8 V532.3 H476.7" stroke="#5fae10" stroke-width="1" fill="none" />
<path d="M468.3 517.5 H457 V531.5 H468.3 M476.7 517.5 H488 V531.5 H476.7" stroke="#c39b08" stroke-width="1" fill="none" />
<rect x="457.5" y="519" width="10.5" height="11.5" fill="#0020ff"/>
<rect x="476" y="519" width="11.5" height="11.5" fill="#0020ff"/>
<path d="M472 520 L472 521.9 L470.8 522.6 L473.2 524 L470.8 525.5 L473.2 526.9 L472 527.6 L472 529.5" stroke="#ff1a00" stroke-width="1" fill="none" />
<path d="M468.3 561 H455 V579 H468.3 M476.7 561 H490 V579 H476.7" stroke="#ff1a00" stroke-width="2.2" fill="none" />
<path d="M468.3 562.2 H456.2 V577.8 H468.3 M476.7 562.2 H488.8 V577.8 H476.7" stroke="#5fae10" stroke-width="1" fill="none" />
<path d="M468.3 563 H457 V577 H468.3 M476.7 563 H488 V577 H476.7" stroke="#c39b08" stroke-width="1" fill="none" />
<rect x="457.5" y="564.5" width="10.5" height="11.5" fill="#0020ff"/>
<rect x="476" y="564.5" width="11.5" height="11.5" fill="#0020ff"/>
<path d="M472 565.5 L472 567.4 L470.8 568.1 L473.2 569.5 L470.8 571 L473.2 572.4 L472 573.1 L472 575" stroke="#ff1a00" stroke-width="1" fill="none" />
<path d="M468.3 606 H455 V624 H468.3 M476.7 606 H490 V624 H476.7" stroke="#ff1a00" stroke-width="2.2" fill="none" />
<path d="M468.3 607.2 H456.2 V622.8 H468.3 M476.7 607.2 H488.8 V622.8 H476.7" stroke="#5fae10" stroke-width="1" fill="none" />
<path d="M468.3 608 H457 V622 H468.3 M476.7 608 H488 V622 H476.7" stroke="#c39b08" stroke-width="1" fill="none" />
<rect x="457.5" y="609.5" width="10.5" height="11.5" fill="#0020ff"/>
<rect x="476" y="609.5" width="11.5" height="11.5" fill="#0020ff"/>
<path d="M472 610.5 L472 612.4 L470.8 613.1 L473.2 614.5 L470.8 616 L473.2 617.4 L472 618.1 L472 620" stroke="#ff1a00" stroke-width="1" fill="none" />
<path d="M0 12.5 L0 0 L4.7 0 L6.2 2.1 L6.2 4.6 L4.7 6.7 L0 6.7 M3.1 6.7 L6.2 12.5 M13.5 0 L16.6 0 L18.2 2.1 L18.2 4.2 L16.6 5.8 L13.5 5.8 L11.9 4.2 L11.9 2.1 L13.5 0 M13.5 5.8 L11.9 7.7 L11.9 10.4 L13.5 12.5 L16.6 12.5 L18.2 10.4 L18.2 7.7 L16.6 5.8 M30.1 5 L28.5 6.9 L25.4 6.9 L23.8 5 L23.8 2.1 L25.4 0 L28.5 0 L30.1 2.1 L30.1 10.4 L28.5 12.5 L25.4 12.5 L23.8 10.4 M40.8 12.5 L40.8 0 L35.8 8.8 L42 8.8" transform="translate(459.8 498.2)" stroke="#c39b08" stroke-width="1.5" fill="none" stroke-linejoin="round" stroke-linecap="round"/>
<path d="M0 12.5 L0 0 L4.7 0 L6.2 2.1 L6.2 4.6 L4.7 6.7 L0 6.7 M3.1 6.7 L6.2 12.5 M13.5 0 L16.6 0 L18.2 2.1 L18.2 4.2 L16.6 5.8 L13.5 5.8 L11.9 4.2 L11.9 2.1 L13.5 0 M13.5 5.8 L11.9 7.7 L11.9 10.4 L13.5 12.5 L16.6 12.5 L18.2 10.4 L18.2 7.7 L16.6 5.8 M30.1 5 L28.5 6.9 L25.4 6.9 L23.8 5 L23.8 2.1 L25.4 0 L28.5 0 L30.1 2.1 L30.1 10.4 L28.5 12.5 L25.4 12.5 L23.8 10.4 M35.8 0 L42 0 L38.6 5.2 L40.4 5.2 L42 7.3 L42 10.4 L40.4 12.5 L37.3 12.5 L35.8 10.4" transform="translate(459.8 544.8)" stroke="#c39b08" stroke-width="1.5" fill="none" stroke-linejoin="round" stroke-linecap="round"/>
<path d="M0 12.5 L0 0 L4.7 0 L6.2 2.1 L6.2 4.6 L4.7 6.7 L0 6.7 M3.1 6.7 L6.2 12.5 M13.6 0 L16.8 0 L18.3 2.1 L18.3 4.2 L16.8 5.8 L13.6 5.8 L12.1 4.2 L12.1 2.1 L13.6 0 M13.6 5.8 L12.1 7.7 L12.1 10.4 L13.6 12.5 L16.8 12.5 L18.3 10.4 L18.3 7.7 L16.8 5.8 M30.4 5 L28.9 6.9 L25.7 6.9 L24.2 5 L24.2 2.1 L25.7 0 L28.9 0 L30.4 2.1 L30.4 10.4 L28.9 12.5 L25.7 12.5 L24.2 10.4 M36.2 2.1 L37.8 0 L40.9 0 L42.5 2.1 L42.5 4.6 L36.2 12.5 L42.5 12.5" transform="translate(459.8 589.8)" stroke="#c39b08" stroke-width="1.5" fill="none" stroke-linejoin="round" stroke-linecap="round"/>
<path d="M429 643.7 V630 H447 V643.7 M429 652.3 V666 H447 V652.3" stroke="#ff1a00" stroke-width="2.2" fill="none" />
<path d="M430.2 643.7 V631.2 H445.8 V643.7 M430.2 652.3 V664.8 H445.8 V652.3" stroke="#5fae10" stroke-width="1" fill="none" />
<path d="M431 643.7 V632 H445 V643.7 M431 652.3 V664 H445 V652.3" stroke="#c39b08" stroke-width="1" fill="none" />
<rect x="431.5" y="632.5" width="12.5" height="12.5" fill="#0020ff"/>
<rect x="431.5" y="652" width="12.5" height="12" fill="#0020ff"/>
<path d="M432 648.5 L433.2 648.5 L434.4 647.5 L436.8 649.5 L439.2 647.5 L441.6 649.5 L442.8 648.5 L444 648.5" stroke="#ff1a00" stroke-width="1" fill="none" />
<path d="M0 13.5 L0 0 L5.1 0 L6.8 2.2 L6.8 5 L5.1 7.2 L0 7.2 M3.4 7.2 L6.8 13.5 M12.9 0 L16.3 0 L18 2.2 L18 4.5 L16.3 6.3 L12.9 6.3 L11.2 4.5 L11.2 2.2 L12.9 0 M12.9 6.3 L11.2 8.3 L11.2 11.2 L12.9 13.5 L16.3 13.5 L18 11.2 L18 8.3 L16.3 6.3 M29.2 5.4 L27.6 7.4 L24.2 7.4 L22.5 5.4 L22.5 2.2 L24.2 0 L27.6 0 L29.2 2.2 L29.2 11.2 L27.6 13.5 L24.2 13.5 L22.5 11.2 M35.6 2.5 L37.5 0 L37.5 13.5" transform="translate(450.8 670.8)" stroke="#c39b08" stroke-width="1.5" fill="none" stroke-linejoin="round" stroke-linecap="round"/>
<rect x="602" y="635" width="9" height="21.5" fill="#0020ff"/>
<rect x="613" y="635" width="8.5" height="21.5" fill="#0020ff"/>
<rect x="602" y="662.5" width="9" height="21.5" fill="#0020ff"/>
<rect x="613" y="662.5" width="8.5" height="21.5" fill="#0020ff"/>
<path d="M600.5 640 H598 V678 H600.5 M622.5 640 H625 V678 H622.5" stroke="#c39b08" stroke-width="1.4" fill="none" />
<path d="M0 13.5 L0 0 L6.8 0 M0 6.8 L5.1 6.8 M12.9 0 L12.9 13.5 L17.9 13.5 L19.6 11.2 L19.6 8.5 L17.9 6.8 L12.9 6.8 M17.9 6.8 L19.6 5 L19.6 2.2 L17.9 0 L12.9 0 M27.4 0 L30.8 0 L32.5 2.2 L32.5 4.5 L30.8 6.3 L27.4 6.3 L25.8 4.5 L25.8 2.2 L27.4 0 M27.4 6.3 L25.8 8.3 L25.8 11.2 L27.4 13.5 L30.8 13.5 L32.5 11.2 L32.5 8.3 L30.8 6.3" transform="translate(639.2 649.8)" stroke="#c39b08" stroke-width="1.5" fill="none" stroke-linejoin="round" stroke-linecap="round"/>
<circle cx="616" cy="627.5" r="1.8" fill="#ff1a00"/>
<circle cx="616" cy="631" r="1.8" fill="#5fae10"/>
<circle cx="576.5" cy="655" r="2" fill="#ff1a00"/>
<circle cx="576.5" cy="659" r="2" fill="#5fae10"/>
<rect x="535" y="664" width="12" height="22.5" rx="6" fill="#0020ff"/>
<rect x="535" y="709" width="12" height="22.5" rx="6" fill="#0020ff"/>
<rect x="552.5" y="664" width="12" height="22.5" rx="6" fill="#0020ff"/>
<rect x="552.5" y="709" width="12" height="22.5" rx="6" fill="#0020ff"/>
<rect x="569.5" y="664" width="12" height="22.5" rx="6" fill="#0020ff"/>
<rect x="569.5" y="709" width="12" height="22.5" rx="6" fill="#0020ff"/>
<path d="M530 689.5 H580.5 L585.5 694 V707 H530 Z" stroke="#c39b08" stroke-width="1.5" fill="none" />
<path d="M0 0 L0 11.2 L1.7 13.5 L5.1 13.5 L6.8 11.2 L6.8 0 M12.1 0 L18.9 0 L15.2 5.6 L17.2 5.6 L18.9 7.9 L18.9 11.2 L17.2 13.5 L13.8 13.5 L12.1 11.2 M24.2 0 L31 0 L27.3 5.6 L29.3 5.6 L31 7.9 L31 11.2 L29.3 13.5 L25.9 13.5 L24.2 11.2" transform="translate(552.8 751.8)" stroke="#c39b08" stroke-width="1.5" fill="none" stroke-linejoin="round" stroke-linecap="round"/>
<circle cx="454.5" cy="735.5" r="15.7" fill="#0020ff"/>
<circle cx="499.5" cy="735.5" r="15.7" fill="#0020ff"/>
<circle cx="454.5" cy="771" r="15.7" fill="#0020ff"/>
<circle cx="499.5" cy="771" r="15.7" fill="#0020ff"/>
<circle cx="369" cy="820.5" r="29.2" fill="#0020ff"/>
<circle cx="585" cy="820.5" r="29.2" fill="#0020ff"/>
<circle cx="172" cy="692.5" r="15.7" fill="#0020ff"/>
<circle cx="172" cy="738" r="15.7" fill="#0020ff"/>
<circle cx="198" cy="806" r="15.7" fill="#0020ff"/>
<circle cx="152.5" cy="806" r="15.7" fill="#0020ff"/>
<circle cx="198" cy="943" r="15.7" fill="#0020ff"/>
<circle cx="152.5" cy="943" r="15.7" fill="#0020ff"/>
<path d="M150 670.5 H194 V759.5 H150" stroke="#c39b08" stroke-width="3" fill="none" />
<path d="M150 767 H259.5 V910" stroke="#c39b08" stroke-width="2.6" fill="none" />
<path d="M992.5 78 V117 M1172.5 78 V117" stroke="#c39b08" stroke-width="2" fill="none" />
<rect x="995" y="106" width="14.2" height="41" fill="#0020ff"/>
<path d="M1011.5 117 H1015.5" stroke="#c39b08" stroke-width="1.5" fill="none" />
<rect x="1017.8" y="106" width="14.2" height="41" fill="#0020ff"/>
<path d="M1034.2 117 H1038.2" stroke="#c39b08" stroke-width="1.5" fill="none" />
<rect x="1040.5" y="106" width="14.2" height="41" fill="#0020ff"/>
<path d="M1057 117 H1061" stroke="#c39b08" stroke-width="1.5" fill="none" />
<rect x="1063.2" y="106" width="14.2" height="41" fill="#0020ff"/>
<path d="M1079.8 117 H1083.8" stroke="#c39b08" stroke-width="1.5" fill="none" />
<rect x="1086" y="106" width="14.2" height="41" fill="#0020ff"/>
<path d="M1102.5 117 H1106.5" stroke="#c39b08" stroke-width="1.5" fill="none" />
<rect x="1108.8" y="106" width="14.2" height="41" fill="#0020ff"/>
<path d="M1125.2 117 H1129.2" stroke="#c39b08" stroke-width="1.5" fill="none" />
<rect x="1131.5" y="106" width="14.2" height="41" fill="#0020ff"/>
<path d="M1148 117 H1152" stroke="#c39b08" stroke-width="1.5" fill="none" />
<rect x="1154.2" y="106" width="14.2" height="41" fill="#0020ff"/>
<circle cx="994.5" cy="154" r="4.5" fill="#c39b08"/>
<path d="M1012.5 157.5 H1040.5" stroke="#ff1a00" stroke-width="2" fill="none" />
<path d="M1013.5 159 H1039.5" stroke="#5fae10" stroke-width="1" fill="none" />
<path d="M1013.3 219 V159.5 H1039.7 V219 Z" stroke="#c39b08" stroke-width="1.6" fill="none" />
<rect x="1015.5" y="162" width="22" height="22.5" fill="#0020ff"/>
<rect x="1015.5" y="192.5" width="22" height="23" fill="#0020ff"/>
<path d="M1015.5 188.5 L1017.7 188.5 L1019.2 186.5 L1022.1 190.5 L1025 186.5 L1028 190.5 L1030.9 186.5 L1033.8 190.5 L1035.3 188.5 L1037.5 188.5" stroke="#c39b08" stroke-width="1.2" fill="none" />
<path d="M1057 157.5 H1084.5" stroke="#ff1a00" stroke-width="2" fill="none" />
<path d="M1058 159 H1083.5" stroke="#5fae10" stroke-width="1" fill="none" />
<path d="M1057.8 219 V159.5 H1083.7 V219 Z" stroke="#c39b08" stroke-width="1.6" fill="none" />
<rect x="1060" y="162" width="22" height="22.5" fill="#0020ff"/>
<rect x="1060" y="192.5" width="22" height="23" fill="#0020ff"/>
<path d="M1060 188.5 L1062.2 188.5 L1063.7 186.5 L1066.6 190.5 L1069.5 186.5 L1072.5 190.5 L1075.4 186.5 L1078.3 190.5 L1079.8 188.5 L1082 188.5" stroke="#c39b08" stroke-width="1.2" fill="none" />
<path d="M1102 157.5 H1130.5" stroke="#ff1a00" stroke-width="2" fill="none" />
<path d="M1103 159 H1129.5" stroke="#5fae10" stroke-width="1" fill="none" />
<path d="M1102.8 219 V159.5 H1129.7 V219 Z" stroke="#c39b08" stroke-width="1.6" fill="none" />
<rect x="1105" y="162" width="22.5" height="22.5" fill="#0020ff"/>
<rect x="1105" y="192.5" width="22.5" height="23" fill="#0020ff"/>
<path d="M1105 188.5 L1107.2 188.5 L1108.8 186.5 L1111.8 190.5 L1114.8 186.5 L1117.8 190.5 L1120.8 186.5 L1123.8 190.5 L1125.2 188.5 L1127.5 188.5" stroke="#c39b08" stroke-width="1.2" fill="none" />
<path d="M1149 157.5 H1177.5" stroke="#ff1a00" stroke-width="2" fill="none" />
<path d="M1150 159 H1176.5" stroke="#5fae10" stroke-width="1" fill="none" />
<path d="M1149.8 219 V159.5 H1176.7 V219 Z" stroke="#c39b08" stroke-width="1.6" fill="none" />
<rect x="1152.5" y="162" width="22.5" height="22.5" fill="#0020ff"/>
<rect x="1152.5" y="192.5" width="22.5" height="23" fill="#0020ff"/>
<path d="M1152.5 188.5 L1154.8 188.5 L1156.2 186.5 L1159.2 190.5 L1162.2 186.5 L1165.2 190.5 L1168.2 186.5 L1171.2 190.5 L1172.8 188.5 L1175 188.5" stroke="#c39b08" stroke-width="1.2" fill="none" />
<path d="M1102 219 H1130.5 M1149 219 H1177.5" stroke="#ff1a00" stroke-width="1.6" fill="none" />
<path d="M0 14 L0 0 L5.2 0 L6.9 2.3 L6.9 5.1 L5.2 7.5 L0 7.5 M3.5 7.5 L6.9 14 M13 2.6 L14.9 0 L14.9 14 M22.3 0 L29.2 0 L25.4 5.8 L27.5 5.8 L29.2 8.2 L29.2 11.7 L27.5 14 L24 14 L22.3 11.7 M33.5 0 L40.4 0 L36 14 M44.6 0 L51.5 0 L47.2 14" transform="translate(1041.2 221.2) rotate(-90)" stroke="#c39b08" stroke-width="1.5" fill="none" stroke-linejoin="round" stroke-linecap="round"/>
<path d="M0 14.5 L0 0 L5.2 0 L6.9 2.4 L6.9 5.3 L5.2 7.7 L0 7.7 M3.5 7.7 L6.9 14.5 M13 2.7 L14.9 0 L14.9 14.5 M22.3 0 L29.2 0 L25.4 6 L27.5 6 L29.2 8.5 L29.2 12.1 L27.5 14.5 L24 14.5 L22.3 12.1 M33.5 0 L40.4 0 L36 14.5 M51.5 2.4 L49.8 0 L46.3 0 L44.6 2.4 L44.6 12.1 L46.3 14.5 L49.8 14.5 L51.5 12.1 L51.5 8.7 L49.8 6.5 L46.3 6.5 L44.6 8.7" transform="translate(1085.8 221.2) rotate(-90)" stroke="#c39b08" stroke-width="1.5" fill="none" stroke-linejoin="round" stroke-linecap="round"/>
<path d="M0 14 L0 0 L5.2 0 L6.9 2.3 L6.9 5.1 L5.2 7.5 L0 7.5 M3.5 7.5 L6.9 14 M13 2.6 L14.9 0 L14.9 14 M22.3 0 L29.2 0 L25.4 5.8 L27.5 5.8 L29.2 8.2 L29.2 11.7 L27.5 14 L24 14 L22.3 11.7 M33.5 0 L40.4 0 L36 14 M51.5 0 L44.6 0 L44.6 5.8 L49.8 5.8 L51.5 8.2 L51.5 11.7 L49.8 14 L46.3 14 L44.6 11.7" transform="translate(1134.8 221.2) rotate(-90)" stroke="#c39b08" stroke-width="1.5" fill="none" stroke-linejoin="round" stroke-linecap="round"/>
<path d="M0 14 L0 0 L5.2 0 L6.9 2.3 L6.9 5.1 L5.2 7.5 L0 7.5 M3.5 7.5 L6.9 14 M13.8 2.6 L15.7 0 L15.7 14 M23.8 0 L30.7 0 L26.9 5.8 L29 5.8 L30.7 8.2 L30.7 11.7 L29 14 L25.5 14 L23.8 11.7 M35.7 0 L42.6 0 L38.3 14 M49.3 0 L52.8 0 L54.5 2.3 L54.5 4.7 L52.8 6.5 L49.3 6.5 L47.6 4.7 L47.6 2.3 L49.3 0 M49.3 6.5 L47.6 8.6 L47.6 11.7 L49.3 14 L52.8 14 L54.5 11.7 L54.5 8.6 L52.8 6.5" transform="translate(1015.2 288.2) rotate(-90)" stroke="#c39b08" stroke-width="1.5" fill="none" stroke-linejoin="round" stroke-linecap="round"/>
<path d="M6.9 2.5 L5.2 0 L1.7 0 L0 2.5 L0 12.5 L1.7 15 L5.2 15 L6.9 12.5 M17.7 15 L17.7 0 L12.2 10.5 L19.1 10.5 M29.9 15 L29.9 0 L24.4 10.5 L31.3 10.5 M43.5 6 L41.8 8.2 L38.3 8.2 L36.6 6 L36.6 2.5 L38.3 0 L41.8 0 L43.5 2.5 L43.5 12.5 L41.8 15 L38.3 15 L36.6 12.5" transform="translate(1038.8 312.2) rotate(-90)" stroke="#c39b08" stroke-width="1.5" fill="none" stroke-linejoin="round" stroke-linecap="round"/>
<path d="M1195 78 V101.5 H1261 V78" stroke="#c39b08" stroke-width="2" fill="none" />
<rect x="1199" y="104" width="13.5" height="42.5" rx="6.8" fill="#0020ff"/>
<rect x="1221.5" y="104" width="13.5" height="42.5" rx="6.8" fill="#0020ff"/>
<rect x="1244" y="104" width="13.5" height="42.5" rx="6.8" fill="#0020ff"/>
<path d="M6.8 2.2 L5.1 0 L1.7 0 L0 2.2 L0 11.2 L1.7 13.5 L5.1 13.5 L6.8 11.2 M19.6 2.2 L17.9 0 L14.6 0 L12.9 2.2 L12.9 11.2 L14.6 13.5 L17.9 13.5 L19.6 11.2 L19.6 8.1 L17.9 6.1 L14.6 6.1 L12.9 8.1 M27.4 0 L30.8 0 L32.5 2.2 L32.5 11.2 L30.8 13.5 L27.4 13.5 L25.8 11.2 L25.8 2.2 L27.4 0" transform="translate(1270.8 107.2) rotate(-90)" stroke="#c39b08" stroke-width="1.5" fill="none" stroke-linejoin="round" stroke-linecap="round"/>
<path d="M0 0 L0 11.2 L1.7 13.5 L5.1 13.5 L6.8 11.2 L6.8 0 M18.2 0 L11.4 0 L11.4 5.6 L16.5 5.6 L18.2 7.9 L18.2 11.2 L16.5 13.5 L13.1 13.5 L11.4 11.2 M24.5 0 L27.9 0 L29.6 2.2 L29.6 4.5 L27.9 6.3 L24.5 6.3 L22.8 4.5 L22.8 2.2 L24.5 0 M24.5 6.3 L22.8 8.3 L22.8 11.2 L24.5 13.5 L27.9 13.5 L29.6 11.2 L29.6 8.3 L27.9 6.3 M36.1 2.5 L38 0 L38 13.5" transform="translate(1275.8 129.8)" stroke="#c39b08" stroke-width="1.5" fill="none" stroke-linejoin="round" stroke-linecap="round"/>
<path d="M1233.2 157.5 H1219.5 V175 H1233.2 M1241.8 157.5 H1255.5 V175 H1241.8" stroke="#ff1a00" stroke-width="2.2" fill="none" />
<path d="M1233.2 158.7 H1220.7 V173.8 H1233.2 M1241.8 158.7 H1254.3 V173.8 H1241.8" stroke="#5fae10" stroke-width="1" fill="none" />
<path d="M1233.2 159.5 H1221.5 V173 H1233.2 M1241.8 159.5 H1253.5 V173 H1241.8" stroke="#c39b08" stroke-width="1" fill="none" />
<rect x="1221.5" y="160" width="12.5" height="12.5" fill="#0020ff"/>
<rect x="1240" y="160" width="12.5" height="12.5" fill="#0020ff"/>
<path d="M1237 161 L1237 163.2 L1236 164 L1238 165.7 L1236 167.3 L1238 169 L1237 169.8 L1237 172" stroke="#ff1a00" stroke-width="0.9" fill="none" />
<path d="M0 13 L0 0 L4.9 0 L6.5 2.2 L6.5 4.8 L4.9 6.9 L0 6.9 M3.2 6.9 L6.5 13 M18.5 5.2 L16.9 7.1 L13.6 7.1 L12 5.2 L12 2.2 L13.6 0 L16.9 0 L18.5 2.2 L18.5 10.8 L16.9 13 L13.6 13 L12 10.8 M24 0 L30.5 0 L26.4 13 M36 0 L42.5 0 L38.9 5.4 L40.9 5.4 L42.5 7.6 L42.5 10.8 L40.9 13 L37.6 13 L36 10.8" transform="translate(1237.8 181.2)" stroke="#c39b08" stroke-width="1.5" fill="none" stroke-linejoin="round" stroke-linecap="round"/>
<rect x="1085" y="263" width="59" height="58.5" fill="#0020ff"/>
<rect x="1080.5" y="243" width="7.3" height="16" rx="3.6" fill="#0020ff"/>
<rect x="1080.5" y="326" width="7.3" height="15.5" rx="3.6" fill="#0020ff"/>
<rect x="1089.2" y="243" width="7.3" height="16" rx="3.6" fill="#0020ff"/>
<rect x="1089.2" y="326" width="7.3" height="15.5" rx="3.6" fill="#0020ff"/>
<rect x="1098" y="243" width="7.3" height="16" rx="3.6" fill="#0020ff"/>
<rect x="1098" y="326" width="7.3" height="15.5" rx="3.6" fill="#0020ff"/>
<rect x="1106.8" y="243" width="7.3" height="16" rx="3.6" fill="#0020ff"/>
<rect x="1106.8" y="326" width="7.3" height="15.5" rx="3.6" fill="#0020ff"/>
<rect x="1115.5" y="243" width="7.3" height="16" rx="3.6" fill="#0020ff"/>
<rect x="1115.5" y="326" width="7.3" height="15.5" rx="3.6" fill="#0020ff"/>
<rect x="1124.2" y="243" width="7.3" height="16" rx="3.6" fill="#0020ff"/>
<rect x="1124.2" y="326" width="7.3" height="15.5" rx="3.6" fill="#0020ff"/>
<rect x="1133" y="243" width="7.3" height="16" rx="3.6" fill="#0020ff"/>
<rect x="1133" y="326" width="7.3" height="15.5" rx="3.6" fill="#0020ff"/>
<rect x="1141.8" y="243" width="7.3" height="16" rx="3.6" fill="#0020ff"/>
<rect x="1141.8" y="326" width="7.3" height="15.5" rx="3.6" fill="#0020ff"/>
<rect x="1065.5" y="257" width="17.5" height="7.3" rx="3.7" fill="#0020ff"/>
<rect x="1148" y="257" width="17.5" height="7.3" rx="3.7" fill="#0020ff"/>
<rect x="1065.5" y="265.9" width="17.5" height="7.3" rx="3.7" fill="#0020ff"/>
<rect x="1148" y="265.9" width="17.5" height="7.3" rx="3.7" fill="#0020ff"/>
<rect x="1065.5" y="274.8" width="17.5" height="7.3" rx="3.7" fill="#0020ff"/>
<rect x="1148" y="274.8" width="17.5" height="7.3" rx="3.7" fill="#0020ff"/>
<rect x="1065.5" y="283.7" width="17.5" height="7.3" rx="3.7" fill="#0020ff"/>
<rect x="1148" y="283.7" width="17.5" height="7.3" rx="3.7" fill="#0020ff"/>
<rect x="1065.5" y="292.6" width="17.5" height="7.3" rx="3.7" fill="#0020ff"/>
<rect x="1148" y="292.6" width="17.5" height="7.3" rx="3.7" fill="#0020ff"/>
<rect x="1065.5" y="301.5" width="17.5" height="7.3" rx="3.7" fill="#0020ff"/>
<rect x="1148" y="301.5" width="17.5" height="7.3" rx="3.7" fill="#0020ff"/>
<rect x="1065.5" y="310.4" width="17.5" height="7.3" rx="3.7" fill="#0020ff"/>
<rect x="1148" y="310.4" width="17.5" height="7.3" rx="3.7" fill="#0020ff"/>
<rect x="1065.5" y="319.3" width="17.5" height="7.3" rx="3.7" fill="#0020ff"/>
<rect x="1148" y="319.3" width="17.5" height="7.3" rx="3.7" fill="#0020ff"/>
<path d="M1072 240.5 H1062 V345 H1085 M1143 345 H1167.5 V262 M1150 240.5 H1155 L1167.5 253 V262" stroke="#c39b08" stroke-width="1.8" fill="none" />
<path d="M0 0 L0 10.8 L1.6 13 L4.9 13 L6.5 10.8 L6.5 0 M18.5 0 L12 0 L12 5.4 L16.9 5.4 L18.5 7.6 L18.5 10.8 L16.9 13 L13.6 13 L12 10.8 M30.5 2.2 L28.9 0 L25.6 0 L24 2.2 L24 10.8 L25.6 13 L28.9 13 L30.5 10.8 L30.5 7.8 L28.9 5.9 L25.6 5.9 L24 7.8" transform="translate(1172.8 226.2)" stroke="#c39b08" stroke-width="1.5" fill="none" stroke-linejoin="round" stroke-linecap="round"/>
<rect x="1181" y="243.5" width="36" height="35.5" fill="none" stroke="#ff1a00" stroke-width="2.2"/>
<rect x="1182.2" y="244.7" width="33.6" height="33.1" fill="none" stroke="#5fae10" stroke-width="1"/>
<rect x="1183" y="245.5" width="32" height="31.5" fill="none" stroke="#c39b08" stroke-width="1"/>
<rect x="1184" y="247.5" width="11.5" height="11" fill="#0020ff"/>
<rect x="1202.5" y="247.5" width="11.5" height="11" fill="#0020ff"/>
<rect x="1184" y="264" width="11.5" height="11.5" fill="#0020ff"/>
<rect x="1202.5" y="264" width="11.5" height="11.5" fill="#0020ff"/>
<rect x="1196.5" y="245.5" width="5" height="31.5" fill="#000"/>
<path d="M1183 261.3 H1196 M1202 261.3 H1215" stroke="#5fae10" stroke-width="1.6" fill="none" />
<path d="M1198.2 251 V255 M1199.8 251 V255 M1195.2 253 H1198.2 M1199.8 253 H1202.8" stroke="#ff1a00" stroke-width="0.9" fill="none" />
<path d="M1198.2 268 V272 M1199.8 268 V272 M1195.2 270 H1198.2 M1199.8 270 H1202.8" stroke="#ff1a00" stroke-width="0.9" fill="none" />
<path d="M6.8 2.2 L5.1 0 L1.7 0 L0 2.2 L0 11.2 L1.7 13.5 L5.1 13.5 L6.8 11.2 M17.1 13.5 L17.1 0 L11.8 9.5 L18.5 9.5 M30.2 0 L23.5 0 L23.5 5.6 L28.6 5.6 L30.2 7.9 L30.2 11.2 L28.6 13.5 L25.2 13.5 L23.5 11.2 M36.9 0 L40.3 0 L42 2.2 L42 11.2 L40.3 13.5 L36.9 13.5 L35.2 11.2 L35.2 2.2 L36.9 0" transform="translate(1220.2 243.8)" stroke="#c39b08" stroke-width="1.5" fill="none" stroke-linejoin="round" stroke-linecap="round"/>
<path d="M6.5 2.2 L4.9 0 L1.6 0 L0 2.2 L0 10.8 L1.6 13 L4.9 13 L6.5 10.8 M17 13 L17 0 L11.8 9.1 L18.3 9.1 M28.9 13 L28.9 0 L23.7 9.1 L30.2 9.1 M35.5 0 L42 0 L37.9 13" transform="translate(1220.2 262.8)" stroke="#c39b08" stroke-width="1.5" fill="none" stroke-linejoin="round" stroke-linecap="round"/>
<path d="M3.4 0 L3.4 13.5 M1.7 0 L5.1 0 M1.7 13.5 L5.1 13.5 M18.2 2.2 L16.5 0 L13.1 0 L11.5 2.2 L11.5 4.5 L13.1 6.8 L16.5 6.8 L18.2 9 L18.2 11.2 L16.5 13.5 L13.1 13.5 L11.5 11.2 M24.6 0 L28 0 L29.7 2.2 L29.7 11.2 L28 13.5 L24.6 13.5 L22.9 11.2 L22.9 2.2 L24.6 0 M34.4 16.7 L41.1 16.7 M52.6 2.2 L50.9 0 L47.5 0 L45.8 2.2 L45.8 11.2 L47.5 13.5 L50.9 13.5 L52.6 11.2 L52.6 7.2 L49.5 7.2 M57.3 13.5 L57.3 0 L64 13.5 L64 0 M68.8 0 L68.8 13.5 L73.8 13.5 L75.5 11.2 L75.5 2.2 L73.8 0 L68.8 0" transform="translate(1229.8 303.2)" stroke="#c39b08" stroke-width="1.5" fill="none" stroke-linejoin="round" stroke-linecap="round"/>
<path d="M0 0 L6.5 0 M3.2 0 L3.2 13 M11.7 13 L11.7 0 L16.5 0 L18.2 2.2 L18.2 4.8 L16.5 6.9 L11.7 6.9 M23.3 0 L29.8 0 L26.3 5.4 L28.2 5.4 L29.8 7.6 L29.8 10.8 L28.2 13 L25 13 L23.3 10.8 M36.6 0 L39.9 0 L41.5 2.2 L41.5 10.8 L39.9 13 L36.6 13 L35 10.8 L35 2.2 L36.6 0" transform="translate(1225.8 325.8)" stroke="#c39b08" stroke-width="1.5" fill="none" stroke-linejoin="round" stroke-linecap="round"/>
<path d="M0 0 L6.5 0 M3.2 0 L3.2 13 M11.7 13 L11.7 0 L16.5 0 L18.2 2.2 L18.2 4.8 L16.5 6.9 L11.7 6.9 M23.3 0 L29.8 0 L26.3 5.4 L28.2 5.4 L29.8 7.6 L29.8 10.8 L28.2 13 L25 13 L23.3 10.8 M40.2 13 L40.2 0 L35 9.1 L41.5 9.1" transform="translate(1303.8 335.8)" stroke="#c39b08" stroke-width="1.5" fill="none" stroke-linejoin="round" stroke-linecap="round"/>
<path d="M3.4 0 L3.4 13.5 M1.7 0 L5.1 0 M1.7 13.5 L5.1 13.5 M18.4 2.2 L16.8 0 L13.4 0 L11.7 2.2 L11.7 4.5 L13.4 6.8 L16.8 6.8 L18.4 9 L18.4 11.2 L16.8 13.5 L13.4 13.5 L11.7 11.2 M25.1 0 L28.5 0 L30.1 2.2 L30.1 11.2 L28.5 13.5 L25.1 13.5 L23.4 11.2 L23.4 2.2 L25.1 0 M35.1 16.7 L41.8 16.7 M53.5 0 L46.8 0 L46.8 5.6 L51.8 5.6 L53.5 7.9 L53.5 11.2 L51.8 13.5 L48.5 13.5 L46.8 11.2 M58.5 0 L61.8 13.5 L65.2 0 M70.2 16.7 L76.9 16.7 M88.6 2.2 L86.9 0 L83.5 0 L81.9 2.2 L81.9 11.2 L83.5 13.5 L86.9 13.5 L88.6 11.2 M93.6 13.5 L96.9 0 L100.3 13.5 M94.9 9 L99 9 M105.2 13.5 L105.2 0 L112 13.5 L112 0" transform="translate(1301.2 357.8)" stroke="#c39b08" stroke-width="1.5" fill="none" stroke-linejoin="round" stroke-linecap="round"/>
<path d="M1039.5 328.7 V315 H1057.5 V328.7 M1039.5 337.3 V351 H1057.5 V337.3" stroke="#ff1a00" stroke-width="2.2" fill="none" />
<path d="M1040.7 328.7 V316.2 H1056.3 V328.7 M1040.7 337.3 V349.8 H1056.3 V337.3" stroke="#5fae10" stroke-width="1" fill="none" />
<path d="M1041.5 328.7 V317 H1055.5 V328.7 M1041.5 337.3 V349 H1055.5 V337.3" stroke="#c39b08" stroke-width="1" fill="none" />
<rect x="1042" y="318" width="13.5" height="12" fill="#0020ff"/>
<rect x="1042" y="337" width="13.5" height="12" fill="#0020ff"/>
<path d="M1046.7 332.7 H1050.7 M1046.7 334.3 H1050.7 M1048.7 329.7 V332.7 M1048.7 334.3 V337.3" stroke="#c39b08" stroke-width="0.9" fill="none" />
<rect x="1078" y="350.5" width="35" height="36.5" fill="none" stroke="#ff1a00" stroke-width="2.2"/>
<rect x="1079.2" y="351.7" width="32.6" height="34.1" fill="none" stroke="#5fae10" stroke-width="1"/>
<rect x="1080" y="352.5" width="31" height="32.5" fill="none" stroke="#c39b08" stroke-width="1"/>
<rect x="1080.5" y="353" width="11.5" height="12.5" fill="#0020ff"/>
<rect x="1099" y="353" width="12" height="12.5" fill="#0020ff"/>
<rect x="1080.5" y="371" width="11.5" height="13" fill="#0020ff"/>
<rect x="1099" y="371" width="12" height="13" fill="#0020ff"/>
<rect x="1093" y="352" width="5" height="34" fill="#000"/>
<path d="M1080 368.2 H1093 M1098 368.2 H1112" stroke="#5fae10" stroke-width="1.6" fill="none" />
<path d="M1094.7 375.5 V379.5 M1096.3 375.5 V379.5 M1091.7 377.5 H1094.7 M1096.3 377.5 H1099.3" stroke="#c39b08" stroke-width="0.9" fill="none" />
<path d="M1095.5 354 L1095.5 356.2 L1094.5 357 L1096.5 358.7 L1094.5 360.3 L1096.5 362 L1095.5 362.8 L1095.5 365" stroke="#c39b08" stroke-width="0.9" fill="none" />
<path d="M0 12.5 L0 0 L4.7 0 L6.2 2.1 L6.2 4.6 L4.7 6.7 L0 6.7 M3.1 6.7 L6.2 12.5 M11.8 0 L18 0 L14.1 12.5 M25.2 2.3 L26.9 0 L26.9 12.5 M37 2.3 L38.7 0 L38.7 12.5" transform="translate(1115.8 354.8)" stroke="#c39b08" stroke-width="1.5" fill="none" stroke-linejoin="round" stroke-linecap="round"/>
<path d="M6.2 2.1 L4.7 0 L1.6 0 L0 2.1 L0 10.4 L1.6 12.5 L4.7 12.5 L6.2 10.4 M16.8 12.5 L16.8 0 L11.8 8.8 L18 8.8 M28.5 12.5 L28.5 0 L23.5 8.8 L29.8 8.8 M36.8 0 L39.9 0 L41.5 2.1 L41.5 4.2 L39.9 5.8 L36.8 5.8 L35.2 4.2 L35.2 2.1 L36.8 0 M36.8 5.8 L35.2 7.7 L35.2 10.4 L36.8 12.5 L39.9 12.5 L41.5 10.4 L41.5 7.7 L39.9 5.8" transform="translate(1115.8 373.2)" stroke="#c39b08" stroke-width="1.5" fill="none" stroke-linejoin="round" stroke-linecap="round"/>
<rect x="1175.5" y="320.5" width="27.5" height="56.5" rx="7" fill="none" stroke="#c39b08" stroke-width="1.6"/>
<rect x="1179.5" y="326" width="18.5" height="19" fill="#0020ff"/>
<rect x="1179.5" y="355.5" width="18.5" height="17.5" fill="#0020ff"/>
<rect x="1177.5" y="346" width="23.5" height="8.5" fill="#000"/>
<path d="M1182.7 348.4 H1194.7 M1182.7 351.9 H1194.7 M1188.7 345.4 V348.4 M1188.7 351.9 V354.9" stroke="#c39b08" stroke-width="1.4" fill="none" />
<path d="M6.9 2.3 L5.2 0 L1.7 0 L0 2.3 L0 11.7 L1.7 14 L5.2 14 L6.9 11.7 M11.7 0 L18.6 0 L14.3 14 M30.3 2.3 L28.6 0 L25.1 0 L23.4 2.3 L23.4 11.7 L25.1 14 L28.6 14 L30.3 11.7 L30.3 8.4 L28.6 6.3 L25.1 6.3 L23.4 8.4 M36.8 0 L40.3 0 L42 2.3 L42 4.7 L40.3 6.5 L36.8 6.5 L35.1 4.7 L35.1 2.3 L36.8 0 M36.8 6.5 L35.1 8.6 L35.1 11.7 L36.8 14 L40.3 14 L42 11.7 L42 8.6 L40.3 6.5" transform="translate(1205.2 375.2) rotate(-90)" stroke="#c39b08" stroke-width="1.5" fill="none" stroke-linejoin="round" stroke-linecap="round"/>
<circle cx="1239" cy="364" r="13" fill="#ff1a00"/>
<circle cx="1239" cy="364" r="11" fill="#5fae10"/>
<circle cx="1239" cy="364" r="10.2" fill="#6aa8ff"/>
<circle cx="1239" cy="364" r="9.2" fill="#0020ff"/>
<circle cx="1275.5" cy="361.5" r="13" fill="#ff1a00"/>
<circle cx="1275.5" cy="361.5" r="11" fill="#5fae10"/>
<circle cx="1275.5" cy="361.5" r="10.2" fill="#6aa8ff"/>
<circle cx="1275.5" cy="361.5" r="9.2" fill="#0020ff"/>
<circle cx="1343" cy="467" r="11" fill="#ff1a00"/>
<circle cx="1343" cy="467" r="9.3" fill="#6aa8ff"/>
<circle cx="1343" cy="467" r="8" fill="#0020ff"/>
<path d="M0 0 L6.8 0 M3.4 0 L3.4 13.5 M11.8 13.5 L11.8 0 L16.8 0 L18.5 2.2 L18.5 5 L16.8 7.2 L11.8 7.2 M25.4 2.5 L27.2 0 L27.2 13.5 M35.2 0 L42 0 L37.8 13.5" transform="translate(1331.2 481.8)" stroke="#c39b08" stroke-width="1.5" fill="none" stroke-linejoin="round" stroke-linecap="round"/>
<circle cx="1018.5" cy="396" r="7.5" fill="#c39b08"/>
<path d="M0 12.2 L0 0 L4.6 0 L6.1 2 L6.1 4.5 L4.6 6.5 L0 6.5 M3 6.5 L6.1 12.2 M9.9 2.2 L11.6 0 L11.6 12.2 M22.5 2 L21 0 L17.9 0 L16.4 2 L16.4 10.2 L17.9 12.2 L21 12.2 L22.5 10.2 L22.5 7.3 L21 5.5 L17.9 5.5 L16.4 7.3 M30.7 0 L24.6 0 L24.6 5.1 L29.2 5.1 L30.7 7.1 L30.7 10.2 L29.2 12.2 L26.1 12.2 L24.6 10.2" transform="translate(1036.7 403.4) rotate(-90)" stroke="#ff1a00" stroke-width="2.0" fill="none" stroke-linejoin="round" stroke-linecap="round"/>
<path d="M0 12.2 L0 0 L4.6 0 L6.1 2 L6.1 4.5 L4.6 6.5 L0 6.5 M3 6.5 L6.1 12.2 M9.9 2.2 L11.6 0 L11.6 12.2 M22.5 2 L21 0 L17.9 0 L16.4 2 L16.4 10.2 L17.9 12.2 L21 12.2 L22.5 10.2 L22.5 7.3 L21 5.5 L17.9 5.5 L16.4 7.3 M30.7 0 L24.6 0 L24.6 5.1 L29.2 5.1 L30.7 7.1 L30.7 10.2 L29.2 12.2 L26.1 12.2 L24.6 10.2" transform="translate(1036.7 403.4) rotate(-90)" stroke="#c39b08" stroke-width="0.8" fill="none" stroke-linejoin="round" stroke-linecap="round"/>
<path d="M0 11.7 L0 0 L4.4 0 L5.8 1.9 L5.8 4.3 L4.4 6.2 L0 6.2 M2.9 6.2 L5.8 11.7 M9.9 2.1 L11.5 0 L11.5 11.7 M22.4 1.9 L21 0 L18 0 L16.6 1.9 L16.6 9.7 L18 11.7 L21 11.7 L22.4 9.7 L22.4 7 L21 5.3 L18 5.3 L16.6 7 M24.9 0 L30.7 0 L27.5 4.9 L29.2 4.9 L30.7 6.8 L30.7 9.7 L29.2 11.7 L26.3 11.7 L24.9 9.7" transform="translate(1053.2 403.4) rotate(-90)" stroke="#ff1a00" stroke-width="2.0" fill="none" stroke-linejoin="round" stroke-linecap="round"/>
<path d="M0 11.7 L0 0 L4.4 0 L5.8 1.9 L5.8 4.3 L4.4 6.2 L0 6.2 M2.9 6.2 L5.8 11.7 M9.9 2.1 L11.5 0 L11.5 11.7 M22.4 1.9 L21 0 L18 0 L16.6 1.9 L16.6 9.7 L18 11.7 L21 11.7 L22.4 9.7 L22.4 7 L21 5.3 L18 5.3 L16.6 7 M24.9 0 L30.7 0 L27.5 4.9 L29.2 4.9 L30.7 6.8 L30.7 9.7 L29.2 11.7 L26.3 11.7 L24.9 9.7" transform="translate(1053.2 403.4) rotate(-90)" stroke="#c39b08" stroke-width="0.8" fill="none" stroke-linejoin="round" stroke-linecap="round"/>
<rect x="1033" y="405.5" width="87" height="35.5" fill="none" stroke="#ff1a00" stroke-width="2.2"/>
<rect x="1034.2" y="406.7" width="84.6" height="33.1" fill="none" stroke="#5fae10" stroke-width="1"/>
<rect x="1035" y="407.5" width="83" height="31.5" fill="none" stroke="#c39b08" stroke-width="1"/>
<rect x="1036" y="407.5" width="13" height="12" fill="#0020ff"/>
<rect x="1036" y="426" width="13" height="12.5" fill="#0020ff"/>
<rect x="1054.5" y="407.5" width="13" height="12" fill="#0020ff"/>
<rect x="1054.5" y="426" width="13" height="12.5" fill="#0020ff"/>
<rect x="1072" y="407.5" width="13" height="12" fill="#0020ff"/>
<rect x="1072" y="426" width="13" height="12.5" fill="#0020ff"/>
<rect x="1089" y="407.5" width="13" height="12" fill="#0020ff"/>
<rect x="1089" y="426" width="13" height="12.5" fill="#0020ff"/>
<rect x="1105" y="407.5" width="13" height="12" fill="#0020ff"/>
<rect x="1105" y="426" width="13" height="12.5" fill="#0020ff"/>
<path d="M1051.7 406 V440" stroke="#ff1a00" stroke-width="2" fill="none" />
<path d="M1069.7 406 V440" stroke="#ff1a00" stroke-width="2" fill="none" />
<path d="M1087 406 V440" stroke="#5fae10" stroke-width="1.2" fill="none" />
<path d="M1103.5 406 V440" stroke="#5fae10" stroke-width="1.2" fill="none" />
<rect x="1035" y="420" width="84" height="5.5" fill="#000"/>
<path d="M1037 422.7 L1038.1 422.7 L1039.2 421.7 L1041.4 423.7 L1043.6 421.7 L1045.8 423.7 L1046.9 422.7 L1048 422.7" stroke="#ff1a00" stroke-width="0.9" fill="none" />
<path d="M1055.5 422.7 L1056.6 422.7 L1057.7 421.7 L1059.9 423.7 L1062.1 421.7 L1064.3 423.7 L1065.4 422.7 L1066.5 422.7" stroke="#ff1a00" stroke-width="0.9" fill="none" />
<path d="M1077.7 420.7 V424.7 M1079.3 420.7 V424.7 M1074.7 422.7 H1077.7 M1079.3 422.7 H1082.3" stroke="#ff1a00" stroke-width="0.9" fill="none" />
<path d="M1094.7 420.7 V424.7 M1096.3 420.7 V424.7 M1091.7 422.7 H1094.7 M1096.3 422.7 H1099.3" stroke="#ff1a00" stroke-width="0.9" fill="none" />
<path d="M1110.7 420.7 V424.7 M1112.3 420.7 V424.7 M1107.7 422.7 H1110.7 M1112.3 422.7 H1115.3" stroke="#ff1a00" stroke-width="0.9" fill="none" />
<path d="M5.8 1.9 L4.4 0 L1.5 0 L0 1.9 L0 9.7 L1.5 11.7 L4.4 11.7 L5.8 9.7 M8.6 1.9 L10.1 0 L13 0 L14.5 1.9 L14.5 4.3 L8.6 11.7 L14.5 11.7 M23.1 4.7 L21.6 6.4 L18.7 6.4 L17.2 4.7 L17.2 1.9 L18.7 0 L21.6 0 L23.1 1.9 L23.1 9.7 L21.6 11.7 L18.7 11.7 L17.2 9.7 M31.7 0 L25.9 0 L25.9 4.9 L30.2 4.9 L31.7 6.8 L31.7 9.7 L30.2 11.7 L27.3 11.7 L25.9 9.7" transform="translate(1123.7 440.4) rotate(-90)" stroke="#ff1a00" stroke-width="2.0" fill="none" stroke-linejoin="round" stroke-linecap="round"/>
<path d="M5.8 1.9 L4.4 0 L1.5 0 L0 1.9 L0 9.7 L1.5 11.7 L4.4 11.7 L5.8 9.7 M8.6 1.9 L10.1 0 L13 0 L14.5 1.9 L14.5 4.3 L8.6 11.7 L14.5 11.7 M23.1 4.7 L21.6 6.4 L18.7 6.4 L17.2 4.7 L17.2 1.9 L18.7 0 L21.6 0 L23.1 1.9 L23.1 9.7 L21.6 11.7 L18.7 11.7 L17.2 9.7 M31.7 0 L25.9 0 L25.9 4.9 L30.2 4.9 L31.7 6.8 L31.7 9.7 L30.2 11.7 L27.3 11.7 L25.9 9.7" transform="translate(1123.7 440.4) rotate(-90)" stroke="#c39b08" stroke-width="0.8" fill="none" stroke-linejoin="round" stroke-linecap="round"/>
<path d="M5.3 1.8 L4 0 L1.3 0 L0 1.8 L0 8.9 L1.3 10.7 L4 10.7 L5.3 8.9 M8.8 1.8 L10.1 0 L12.8 0 L14.1 1.8 L14.1 3.9 L8.8 10.7 L14.1 10.7 M22.9 4.3 L21.6 5.9 L18.9 5.9 L17.6 4.3 L17.6 1.8 L18.9 0 L21.6 0 L22.9 1.8 L22.9 8.9 L21.6 10.7 L18.9 10.7 L17.6 8.9 M30.6 10.7 L30.6 0 L26.4 7.5 L31.7 7.5" transform="translate(1139.7 440.4) rotate(-90)" stroke="#ff1a00" stroke-width="2.0" fill="none" stroke-linejoin="round" stroke-linecap="round"/>
<path d="M5.3 1.8 L4 0 L1.3 0 L0 1.8 L0 8.9 L1.3 10.7 L4 10.7 L5.3 8.9 M8.8 1.8 L10.1 0 L12.8 0 L14.1 1.8 L14.1 3.9 L8.8 10.7 L14.1 10.7 M22.9 4.3 L21.6 5.9 L18.9 5.9 L17.6 4.3 L17.6 1.8 L18.9 0 L21.6 0 L22.9 1.8 L22.9 8.9 L21.6 10.7 L18.9 10.7 L17.6 8.9 M30.6 10.7 L30.6 0 L26.4 7.5 L31.7 7.5" transform="translate(1139.7 440.4) rotate(-90)" stroke="#c39b08" stroke-width="0.8" fill="none" stroke-linejoin="round" stroke-linecap="round"/>
<path d="M5.8 1.9 L4.4 0 L1.5 0 L0 1.9 L0 9.7 L1.5 11.7 L4.4 11.7 L5.8 9.7 M8.6 1.9 L10.1 0 L13 0 L14.5 1.9 L14.5 4.3 L8.6 11.7 L14.5 11.7 M23.1 4.7 L21.6 6.4 L18.7 6.4 L17.2 4.7 L17.2 1.9 L18.7 0 L21.6 0 L23.1 1.9 L23.1 9.7 L21.6 11.7 L18.7 11.7 L17.2 9.7 M25.9 0 L31.7 0 L28.5 4.9 L30.2 4.9 L31.7 6.8 L31.7 9.7 L30.2 11.7 L27.3 11.7 L25.9 9.7" transform="translate(1154.7 440.4) rotate(-90)" stroke="#ff1a00" stroke-width="2.0" fill="none" stroke-linejoin="round" stroke-linecap="round"/>
<path d="M5.8 1.9 L4.4 0 L1.5 0 L0 1.9 L0 9.7 L1.5 11.7 L4.4 11.7 L5.8 9.7 M8.6 1.9 L10.1 0 L13 0 L14.5 1.9 L14.5 4.3 L8.6 11.7 L14.5 11.7 M23.1 4.7 L21.6 6.4 L18.7 6.4 L17.2 4.7 L17.2 1.9 L18.7 0 L21.6 0 L23.1 1.9 L23.1 9.7 L21.6 11.7 L18.7 11.7 L17.2 9.7 M25.9 0 L31.7 0 L28.5 4.9 L30.2 4.9 L31.7 6.8 L31.7 9.7 L30.2 11.7 L27.3 11.7 L25.9 9.7" transform="translate(1154.7 440.4) rotate(-90)" stroke="#c39b08" stroke-width="0.8" fill="none" stroke-linejoin="round" stroke-linecap="round"/>
<rect x="1173" y="401" width="38" height="31" fill="#0020ff"/>
<rect x="1173" y="447" width="38" height="29.5" fill="#0020ff"/>
<rect x="1173" y="491" width="38" height="34" fill="#0020ff"/>
<rect x="1273" y="425" width="39" height="71" fill="#0020ff"/>
<path d="M1217 530 V401 Q1217 396.5 1222 396.5 H1263.5 Q1268.5 396.5 1268.5 401 V530" stroke="#c39b08" stroke-width="2.2" fill="none" />
<path d="M0 0 L0 11.2 L1.7 13.5 L5.1 13.5 L6.8 11.2 L6.8 0 M12.6 0 L19.4 0 L15.7 5.6 L17.7 5.6 L19.4 7.9 L19.4 11.2 L17.7 13.5 L14.3 13.5 L12.6 11.2 M32 0 L25.2 0 L25.2 5.6 L30.3 5.6 L32 7.9 L32 11.2 L30.3 13.5 L26.9 13.5 L25.2 11.2" transform="translate(1289.8 393.2)" stroke="#c39b08" stroke-width="1.5" fill="none" stroke-linejoin="round" stroke-linecap="round"/>
<path d="M6.5 2.2 L4.9 0 L1.6 0 L0 2.2 L0 10.8 L1.6 13 L4.9 13 L6.5 10.8 M18.8 5.2 L17.2 7.1 L14 7.1 L12.3 5.2 L12.3 2.2 L14 0 L17.2 0 L18.8 2.2 L18.8 10.8 L17.2 13 L14 13 L12.3 10.8 M26.3 0 L29.5 0 L31.2 2.2 L31.2 10.8 L29.5 13 L26.3 13 L24.7 10.8 L24.7 2.2 L26.3 0 M43.5 2.2 L41.9 0 L38.6 0 L37 2.2 L37 10.8 L38.6 13 L41.9 13 L43.5 10.8 L43.5 7.8 L41.9 5.9 L38.6 5.9 L37 7.8" transform="translate(1353.8 385.8)" stroke="#c39b08" stroke-width="1.5" fill="none" stroke-linejoin="round" stroke-linecap="round"/>
<rect x="1351.5" y="406" width="57.5" height="29" rx="7" fill="none" stroke="#c39b08" stroke-width="1.8"/>
<rect x="1355.5" y="409.5" width="19.5" height="21.5" fill="#0020ff"/>
<rect x="1385" y="409.5" width="19.5" height="21.5" fill="#0020ff"/>
<rect x="1376" y="404" width="8" height="33" fill="#000"/>
<path d="M1376 418.2 H1384 M1376 422.8 H1384 M1380 411.2 V418.2 M1380 422.8 V429.8" stroke="#c39b08" stroke-width="1.8" fill="none" />
<rect x="989.5" y="476" width="133" height="54" fill="#0020ff"/>
<rect x="986.5" y="455" width="7.3" height="17" rx="3.6" fill="#0020ff"/>
<rect x="995.4" y="455" width="7.3" height="17" rx="3.6" fill="#0020ff"/>
<rect x="1004.2" y="455" width="7.3" height="17" rx="3.6" fill="#0020ff"/>
<rect x="1013" y="455" width="7.3" height="17" rx="3.6" fill="#0020ff"/>
<rect x="1021.9" y="455" width="7.3" height="17" rx="3.7" fill="#0020ff"/>
<rect x="1030.8" y="455" width="7.3" height="17" rx="3.6" fill="#0020ff"/>
<rect x="1039.6" y="455" width="7.3" height="17" rx="3.6" fill="#0020ff"/>
<rect x="1048.5" y="455" width="7.3" height="17" rx="3.6" fill="#0020ff"/>
<rect x="1057.3" y="455" width="7.3" height="17" rx="3.6" fill="#0020ff"/>
<rect x="1066.2" y="455" width="7.3" height="17" rx="3.6" fill="#0020ff"/>
<rect x="1075" y="455" width="7.3" height="17" rx="3.6" fill="#0020ff"/>
<rect x="1083.8" y="455" width="7.3" height="17" rx="3.6" fill="#0020ff"/>
<rect x="1092.7" y="455" width="7.3" height="17" rx="3.6" fill="#0020ff"/>
<rect x="1101.5" y="455" width="7.3" height="17" rx="3.6" fill="#0020ff"/>
<rect x="1110.4" y="455" width="7.3" height="17" rx="3.6" fill="#0020ff"/>
<rect x="1119.2" y="455" width="7.3" height="17" rx="3.6" fill="#0020ff"/>
<rect x="968" y="472.5" width="18" height="7.3" rx="3.7" fill="#0020ff"/>
<rect x="1126" y="472.5" width="18" height="7.3" rx="3.7" fill="#0020ff"/>
<rect x="968" y="481.4" width="18" height="7.3" rx="3.7" fill="#0020ff"/>
<rect x="1126" y="481.4" width="18" height="7.3" rx="3.7" fill="#0020ff"/>
<rect x="968" y="490.3" width="18" height="7.3" rx="3.7" fill="#0020ff"/>
<rect x="1126" y="490.3" width="18" height="7.3" rx="3.7" fill="#0020ff"/>
<rect x="968" y="499.2" width="18" height="7.3" rx="3.7" fill="#0020ff"/>
<rect x="1126" y="499.2" width="18" height="7.3" rx="3.7" fill="#0020ff"/>
<path d="M975.5 468.5 V461.5 H984 M1131 461 H1138.5 V470" stroke="#c39b08" stroke-width="2" fill="none" />
<path d="M5 8 L5 0 L0 5.6 L6.2 5.6" transform="translate(1065 443.5) rotate(90)" stroke="#ff1a00" stroke-width="1.5" fill="none" stroke-linejoin="round" stroke-linecap="round"/>
<circle cx="1061" cy="450" r="1.2" fill="#5fae10"/>
<path d="M1148 490 l3 4 l-3 3" stroke="#c39b08" stroke-width="1.2" fill="none" />
<path d="M964 481 l-3 4 l3 3" stroke="#c39b08" stroke-width="1.2" fill="none" />
<rect x="1336" y="60" width="58.5" height="40.5" rx="7" fill="none" stroke="#c39b08" stroke-width="1.6"/>
<rect x="1340.5" y="70" width="19.5" height="26.5" fill="#0020ff"/>
<rect x="1371" y="70" width="20" height="26.5" fill="#0020ff"/>
<rect x="1361.5" y="70" width="8" height="33" fill="#000"/>
<path d="M1361.5 83.8 H1369.5 M1361.5 88.2 H1369.5 M1365.5 76.8 V83.8 M1365.5 88.2 V95.2" stroke="#c39b08" stroke-width="1.8" fill="none" />
<rect x="1397.5" y="60" width="57" height="40.5" rx="7" fill="none" stroke="#c39b08" stroke-width="1.6"/>
<rect x="1402" y="70" width="19" height="26.5" fill="#0020ff"/>
<rect x="1432.5" y="70" width="18" height="26.5" fill="#0020ff"/>
<rect x="1422.8" y="70" width="8" height="33" fill="#000"/>
<path d="M1422.8 83.8 H1430.8 M1422.8 88.2 H1430.8 M1426.8 76.8 V83.8 M1426.8 88.2 V95.2" stroke="#c39b08" stroke-width="1.8" fill="none" />
<rect x="1482.5" y="60" width="57.5" height="40.5" rx="7" fill="none" stroke="#c39b08" stroke-width="1.6"/>
<rect x="1487.5" y="70" width="20" height="26.5" fill="#0020ff"/>
<rect x="1517" y="70" width="19" height="26.5" fill="#0020ff"/>
<rect x="1508.2" y="70" width="8" height="33" fill="#000"/>
<path d="M1508.2 83.8 H1516.2 M1508.2 88.2 H1516.2 M1512.2 76.8 V83.8 M1512.2 88.2 V95.2" stroke="#c39b08" stroke-width="1.8" fill="none" />
<rect x="1484" y="109.5" width="57" height="28.5" rx="7" fill="none" stroke="#c39b08" stroke-width="1.8"/>
<rect x="1488" y="114" width="18.5" height="19.5" fill="#0020ff"/>
<rect x="1517" y="114" width="19" height="19.5" fill="#0020ff"/>
<rect x="1507.5" y="107" width="8.5" height="33" fill="#000"/>
<path d="M1507.7 121.5 H1515.7 M1507.7 126 H1515.7 M1511.7 114.5 V121.5 M1511.7 126 V132.9" stroke="#c39b08" stroke-width="1.8" fill="none" />
<rect x="1552.5" y="85.5" width="60.5" height="27.5" fill="none" stroke="#c39b08" stroke-width="1.6"/>
<path d="M1552.5 85.5 V113 M1613 85.5 V113" stroke="#ff1a00" stroke-width="0.8" fill="none" />
<rect x="1556" y="88.5" width="23" height="22" fill="#0020ff"/>
<rect x="1587" y="88.5" width="23" height="22" fill="#0020ff"/>
<rect x="1580" y="84" width="6" height="31" fill="#000"/>
<path d="M1583 88 L1583 92.6 L1581 93.8 L1585 96 L1581 98.3 L1585 100.7 L1581 103 L1585 105.2 L1583 106.4 L1583 111" stroke="#c39b08" stroke-width="1.2" fill="none" />
<path d="M0 13.5 L0 0 L5.1 0 L6.8 2.2 L6.8 5 L5.1 7.2 L0 7.2 M3.4 7.2 L6.8 13.5 M11.9 0 L18.7 0 L15 5.6 L17 5.6 L18.7 7.9 L18.7 11.2 L17 13.5 L13.6 13.5 L11.9 11.2 M29.2 13.5 L29.2 0 L23.8 9.5 L30.6 9.5 M35.8 2.2 L37.4 0 L40.8 0 L42.5 2.2 L42.5 5 L35.8 13.5 L42.5 13.5" transform="translate(1625.8 93.2)" stroke="#c39b08" stroke-width="1.5" fill="none" stroke-linejoin="round" stroke-linecap="round"/>
<path d="M1549 82 H1596" stroke="#c39b08" stroke-width="2" fill="none" />
<rect x="1552" y="76" width="38" height="4.5" fill="#0020ff"/>
<path d="M1333.5 103.5 H1395 V132 H1333.5 Z" stroke="#c39b08" stroke-width="1.6" fill="none" />
<path d="M1332.7 104 V132.8 H1395.5" stroke="#ff1a00" stroke-width="1" fill="none" />
<rect x="1337.5" y="107.5" width="22.5" height="21.5" fill="#0020ff"/>
<rect x="1369.5" y="107.5" width="22.5" height="21.5" fill="#0020ff"/>
<rect x="1360.8" y="102" width="8" height="32" fill="#000"/>
<path d="M1364.8 106 L1364.8 110.8 L1362.8 112 L1366.8 114.4 L1362.8 116.8 L1366.8 119.2 L1362.8 121.6 L1366.8 124 L1364.8 125.2 L1364.8 130" stroke="#c39b08" stroke-width="1.2" fill="none" />
<path d="M1398 103.5 H1457 V132 H1398 Z" stroke="#c39b08" stroke-width="1.6" fill="none" />
<path d="M1397.2 104 V132.8 H1457.5" stroke="#ff1a00" stroke-width="1" fill="none" />
<rect x="1401" y="107.5" width="21.5" height="21.5" fill="#0020ff"/>
<rect x="1431.5" y="107.5" width="22.5" height="21.5" fill="#0020ff"/>
<rect x="1423" y="102" width="8" height="32" fill="#000"/>
<path d="M1427 106 L1427 110.8 L1425 112 L1429 114.4 L1425 116.8 L1429 119.2 L1425 121.6 L1429 124 L1427 125.2 L1427 130" stroke="#c39b08" stroke-width="1.2" fill="none" />
<path d="M0 10.3 L0 0 L3.9 0 L5.2 1.7 L5.2 3.8 L3.9 5.5 L0 5.5 M2.6 5.5 L5.2 10.3 M8.2 0 L13.4 0 L10.5 4.3 L12.1 4.3 L13.4 6 L13.4 8.6 L12.1 10.3 L9.5 10.3 L8.2 8.6 M17.7 0 L20.3 0 L21.6 1.7 L21.6 3.4 L20.3 4.8 L17.7 4.8 L16.4 3.4 L16.4 1.7 L17.7 0 M17.7 4.8 L16.4 6.4 L16.4 8.6 L17.7 10.3 L20.3 10.3 L21.6 8.6 L21.6 6.4 L20.3 4.8 M24.7 0 L29.8 0 L26.6 10.3" transform="translate(1335.6 136.1)" stroke="#ff1a00" stroke-width="1.9" fill="none" stroke-linejoin="round" stroke-linecap="round"/>
<path d="M0 10.3 L0 0 L3.9 0 L5.2 1.7 L5.2 3.8 L3.9 5.5 L0 5.5 M2.6 5.5 L5.2 10.3 M8.2 0 L13.4 0 L10.5 4.3 L12.1 4.3 L13.4 6 L13.4 8.6 L12.1 10.3 L9.5 10.3 L8.2 8.6 M17.7 0 L20.3 0 L21.6 1.7 L21.6 3.4 L20.3 4.8 L17.7 4.8 L16.4 3.4 L16.4 1.7 L17.7 0 M17.7 4.8 L16.4 6.4 L16.4 8.6 L17.7 10.3 L20.3 10.3 L21.6 8.6 L21.6 6.4 L20.3 4.8 M24.7 0 L29.8 0 L26.6 10.3" transform="translate(1335.6 136.1)" stroke="#c39b08" stroke-width="0.7" fill="none" stroke-linejoin="round" stroke-linecap="round"/>
<path d="M0 10.3 L0 0 L3.9 0 L5.2 1.7 L5.2 3.8 L3.9 5.5 L0 5.5 M2.6 5.5 L5.2 10.3 M8.4 0 L13.5 0 L10.7 4.3 L12.2 4.3 L13.5 6 L13.5 8.6 L12.2 10.3 L9.7 10.3 L8.4 8.6 M21.9 4.1 L20.6 5.7 L18.1 5.7 L16.8 4.1 L16.8 1.7 L18.1 0 L20.6 0 L21.9 1.7 L21.9 8.6 L20.6 10.3 L18.1 10.3 L16.8 8.6 M25.2 1.7 L26.4 0 L29 0 L30.3 1.7 L30.3 3.8 L25.2 10.3 L30.3 10.3" transform="translate(1401.1 136.1)" stroke="#ff1a00" stroke-width="1.9" fill="none" stroke-linejoin="round" stroke-linecap="round"/>
<path d="M0 10.3 L0 0 L3.9 0 L5.2 1.7 L5.2 3.8 L3.9 5.5 L0 5.5 M2.6 5.5 L5.2 10.3 M8.4 0 L13.5 0 L10.7 4.3 L12.2 4.3 L13.5 6 L13.5 8.6 L12.2 10.3 L9.7 10.3 L8.4 8.6 M21.9 4.1 L20.6 5.7 L18.1 5.7 L16.8 4.1 L16.8 1.7 L18.1 0 L20.6 0 L21.9 1.7 L21.9 8.6 L20.6 10.3 L18.1 10.3 L16.8 8.6 M25.2 1.7 L26.4 0 L29 0 L30.3 1.7 L30.3 3.8 L25.2 10.3 L30.3 10.3" transform="translate(1401.1 136.1)" stroke="#c39b08" stroke-width="0.7" fill="none" stroke-linejoin="round" stroke-linecap="round"/>
<path d="M1333.5 147.5 H1363 V208 H1333.5 Z" stroke="#c39b08" stroke-width="1.6" fill="none" />
<path d="M1333.0 147 H1363.5 M1332.7 147 V208.6 H1363.5" stroke="#ff1a00" stroke-width="1" fill="none" />
<rect x="1337.5" y="150.5" width="22.5" height="22.5" fill="#0020ff"/>
<rect x="1337.5" y="181" width="22.5" height="23" fill="#0020ff"/>
<rect x="1331.5" y="174" width="33.5" height="6" fill="#000"/>
<path d="M1336.5 177 L1339 177 L1340.6 175 L1343.8 179 L1347.1 175 L1350.4 179 L1353.7 175 L1356.9 179 L1358.5 177 L1361 177" stroke="#c39b08" stroke-width="1.2" fill="none" />
<path d="M1365.5 147.5 H1394.5 V208 H1365.5 Z" stroke="#c39b08" stroke-width="1.6" fill="none" />
<path d="M1365.0 147 H1395.0 M1364.7 147 V208.6 H1395.0" stroke="#ff1a00" stroke-width="1" fill="none" />
<rect x="1368.5" y="150.5" width="22" height="22.5" fill="#0020ff"/>
<rect x="1368.5" y="181" width="22" height="23" fill="#0020ff"/>
<rect x="1363.5" y="174" width="33" height="6" fill="#000"/>
<path d="M1367.5 177 L1369.9 177 L1371.5 175 L1374.7 179 L1377.9 175 L1381.1 179 L1384.3 175 L1387.5 179 L1389.1 177 L1391.5 177" stroke="#c39b08" stroke-width="1.2" fill="none" />
<path d="M1398 147.5 H1426.5 V208 H1398 Z" stroke="#c39b08" stroke-width="1.6" fill="none" />
<path d="M1397.5 147 H1427.0 M1397.2 147 V208.6 H1427.0" stroke="#ff1a00" stroke-width="1" fill="none" />
<rect x="1401.5" y="150.5" width="21.5" height="22.5" fill="#0020ff"/>
<rect x="1401.5" y="181" width="21.5" height="23" fill="#0020ff"/>
<rect x="1396" y="174" width="32.5" height="6" fill="#000"/>
<path d="M1400.5 177 L1402.8 177 L1404.4 175 L1407.5 179 L1410.7 175 L1413.8 179 L1417 175 L1420.1 179 L1421.7 177 L1424 177" stroke="#c39b08" stroke-width="1.2" fill="none" />
<path d="M1428.5 147.5 H1457.5 V208 H1428.5 Z" stroke="#c39b08" stroke-width="1.6" fill="none" />
<path d="M1428.0 147 H1458.0 M1427.7 147 V208.6 H1458.0" stroke="#ff1a00" stroke-width="1" fill="none" />
<rect x="1432" y="150.5" width="22" height="22.5" fill="#0020ff"/>
<rect x="1432" y="181" width="22" height="23" fill="#0020ff"/>
<rect x="1426.5" y="174" width="33" height="6" fill="#000"/>
<path d="M1431 177 L1433.4 177 L1435 175 L1438.2 179 L1441.4 175 L1444.6 179 L1447.8 175 L1451 179 L1452.6 177 L1455 177" stroke="#c39b08" stroke-width="1.2" fill="none" />
<path d="M0 10.8 L0 0 L4.1 0 L5.4 1.8 L5.4 4 L4.1 5.8 L0 5.8 M2.7 5.8 L5.4 10.8 M8.6 0 L14 0 L11.1 4.5 L12.7 4.5 L14 6.3 L14 9 L12.7 10.8 L10 10.8 L8.6 9 M22.7 4.3 L21.3 5.9 L18.6 5.9 L17.3 4.3 L17.3 1.8 L18.6 0 L21.3 0 L22.7 1.8 L22.7 9 L21.3 10.8 L18.6 10.8 L17.3 9 M30.2 10.8 L30.2 0 L25.9 7.6 L31.3 7.6" transform="translate(1428.1 211.1)" stroke="#ff1a00" stroke-width="1.9" fill="none" stroke-linejoin="round" stroke-linecap="round"/>
<path d="M0 10.8 L0 0 L4.1 0 L5.4 1.8 L5.4 4 L4.1 5.8 L0 5.8 M2.7 5.8 L5.4 10.8 M8.6 0 L14 0 L11.1 4.5 L12.7 4.5 L14 6.3 L14 9 L12.7 10.8 L10 10.8 L8.6 9 M22.7 4.3 L21.3 5.9 L18.6 5.9 L17.3 4.3 L17.3 1.8 L18.6 0 L21.3 0 L22.7 1.8 L22.7 9 L21.3 10.8 L18.6 10.8 L17.3 9 M30.2 10.8 L30.2 0 L25.9 7.6 L31.3 7.6" transform="translate(1428.1 211.1)" stroke="#c39b08" stroke-width="0.7" fill="none" stroke-linejoin="round" stroke-linecap="round"/>
<path d="M0 15 L0 0 L5.2 0 L6.9 2.5 L6.9 5.5 L5.2 8 L0 8 M3.5 8 L6.9 15 M11.2 0 L18.1 0 L14.3 6.2 L16.4 6.2 L18.1 8.8 L18.1 12.5 L16.4 15 L12.9 15 L11.2 12.5 M24.1 0 L27.6 0 L29.3 2.5 L29.3 5 L27.6 7 L24.1 7 L22.4 5 L22.4 2.5 L24.1 0 M24.1 7 L22.4 9.2 L22.4 12.5 L24.1 15 L27.6 15 L29.3 12.5 L29.3 9.2 L27.6 7 M33.6 2.5 L35.3 0 L38.8 0 L40.5 2.5 L40.5 5.5 L33.6 15 L40.5 15" transform="translate(1338.8 263.2) rotate(-90)" stroke="#c39b08" stroke-width="1.5" fill="none" stroke-linejoin="round" stroke-linecap="round"/>
<path d="M0 14.5 L0 0 L5.2 0 L6.9 2.4 L6.9 5.3 L5.2 7.7 L0 7.7 M3.5 7.7 L6.9 14.5 M11.2 0 L18.1 0 L14.3 6 L16.4 6 L18.1 8.5 L18.1 12.1 L16.4 14.5 L12.9 14.5 L11.2 12.1 M24.1 0 L27.6 0 L29.3 2.4 L29.3 4.8 L27.6 6.8 L24.1 6.8 L22.4 4.8 L22.4 2.4 L24.1 0 M24.1 6.8 L22.4 8.9 L22.4 12.1 L24.1 14.5 L27.6 14.5 L29.3 12.1 L29.3 8.9 L27.6 6.8 M40.5 2.4 L38.8 0 L35.3 0 L33.6 2.4 L33.6 12.1 L35.3 14.5 L38.8 14.5 L40.5 12.1 L40.5 8.7 L38.8 6.5 L35.3 6.5 L33.6 8.7" transform="translate(1369.8 263.2) rotate(-90)" stroke="#c39b08" stroke-width="1.5" fill="none" stroke-linejoin="round" stroke-linecap="round"/>
<path d="M0 14.5 L0 0 L5.2 0 L6.9 2.4 L6.9 5.3 L5.2 7.7 L0 7.7 M3.5 7.7 L6.9 14.5 M10.9 0 L17.8 0 L14 6 L16 6 L17.8 8.5 L17.8 12.1 L16 14.5 L12.6 14.5 L10.9 12.1 M28.6 5.8 L26.9 8 L23.5 8 L21.7 5.8 L21.7 2.4 L23.5 0 L26.9 0 L28.6 2.4 L28.6 12.1 L26.9 14.5 L23.5 14.5 L21.7 12.1 M34.5 2.7 L36.4 0 L36.4 14.5" transform="translate(1400.8 258.2) rotate(-90)" stroke="#c39b08" stroke-width="1.5" fill="none" stroke-linejoin="round" stroke-linecap="round"/>
<path d="M0 14.5 L0 0 L5.2 0 L6.9 2.4 L6.9 5.3 L5.2 7.7 L0 7.7 M3.5 7.7 L6.9 14.5 M11.7 0 L18.6 0 L14.8 6 L16.9 6 L18.6 8.5 L18.6 12.1 L16.9 14.5 L13.4 14.5 L11.7 12.1 M30.3 0 L23.4 0 L23.4 6 L28.6 6 L30.3 8.5 L30.3 12.1 L28.6 14.5 L25.1 14.5 L23.4 12.1 M35.1 2.4 L36.8 0 L40.3 0 L42 2.4 L42 5.3 L35.1 14.5 L42 14.5" transform="translate(1427.2 313.2) rotate(-90)" stroke="#c39b08" stroke-width="1.5" fill="none" stroke-linejoin="round" stroke-linecap="round"/>
<path d="M1430.4 237.5 H1416.5 V257 H1430.4 M1439.1 237.5 H1453 V257 H1439.1" stroke="#ff1a00" stroke-width="2.2" fill="none" />
<path d="M1430.4 238.7 H1417.7 V255.8 H1430.4 M1439.1 238.7 H1451.8 V255.8 H1439.1" stroke="#5fae10" stroke-width="1" fill="none" />
<path d="M1430.4 239.5 H1418.5 V255 H1430.4 M1439.1 239.5 H1451 V255 H1439.1" stroke="#c39b08" stroke-width="1" fill="none" />
<rect x="1419.5" y="240.5" width="11.5" height="12.5" fill="#0020ff"/>
<rect x="1437.5" y="240.5" width="12" height="12.5" fill="#0020ff"/>
<path d="M1434.3 241 L1434.3 243.4 L1433.3 244.3 L1435.3 246.1 L1433.3 247.9 L1435.3 249.7 L1434.3 250.6 L1434.3 253" stroke="#ff1a00" stroke-width="0.9" fill="none" />
<circle cx="1484.5" cy="152" r="6" fill="none" stroke="#c39b08" stroke-width="1.5"/>
<path d="M1496.5 160.5 H1520 A12 12 0 0 0 1544 160.5 H1565.5" stroke="#c39b08" stroke-width="1.8" fill="none" />
<path d="M0 0 L0 10.8 L1.6 13 L4.9 13 L6.5 10.8 L6.5 0 M19 2.2 L17.4 0 L14.1 0 L12.5 2.2 L12.5 10.8 L14.1 13 L17.4 13 L19 10.8 L19 7.8 L17.4 5.9 L14.1 5.9 L12.5 7.8 M30.2 13 L30.2 0 L25 9.1 L31.5 9.1" transform="translate(1546.8 143.2)" stroke="#c39b08" stroke-width="1.5" fill="none" stroke-linejoin="round" stroke-linecap="round"/>
<rect x="1465.5" y="170" width="45.5" height="17" fill="#0020ff"/>
<rect x="1556" y="170" width="45" height="17" rx="8.5" fill="#0020ff"/>
<rect x="1465.5" y="192.8" width="45.5" height="17" rx="8.5" fill="#0020ff"/>
<rect x="1556" y="192.8" width="45" height="17" rx="8.5" fill="#0020ff"/>
<rect x="1465.5" y="215.7" width="45.5" height="17" rx="8.5" fill="#0020ff"/>
<rect x="1556" y="215.7" width="45" height="17" rx="8.5" fill="#0020ff"/>
<rect x="1465.5" y="238.6" width="45.5" height="17" rx="8.5" fill="#0020ff"/>
<rect x="1556" y="238.6" width="45" height="17" rx="8.5" fill="#0020ff"/>
<rect x="1465.5" y="261.4" width="45.5" height="17" rx="8.5" fill="#0020ff"/>
<rect x="1556" y="261.4" width="45" height="17" rx="8.5" fill="#0020ff"/>
<rect x="1465.5" y="284.2" width="45.5" height="17" rx="8.5" fill="#0020ff"/>
<rect x="1556" y="284.2" width="45" height="17" rx="8.5" fill="#0020ff"/>
<rect x="1465.5" y="307.1" width="45.5" height="17" rx="8.5" fill="#0020ff"/>
<rect x="1556" y="307.1" width="45" height="17" rx="8.5" fill="#0020ff"/>
<path d="M1498 328 H1571" stroke="#c39b08" stroke-width="1.8" fill="none" />
<path d="M1760 173 H1613 V437.5 H1760" stroke="#c39b08" stroke-width="2" fill="none" />
<circle cx="1634.5" cy="192" r="16.7" fill="#0020ff"/>
<circle cx="1634.5" cy="419.5" r="16.7" fill="#0020ff"/>
<circle cx="1680" cy="192" r="16.7" fill="#0020ff"/>
<circle cx="1680" cy="419.5" r="16.7" fill="#0020ff"/>
<circle cx="1725.5" cy="192" r="16.7" fill="#0020ff"/>
<circle cx="1725.5" cy="419.5" r="16.7" fill="#0020ff"/>
<path d="M0 0 L0 13.5 L5.1 13.5 L6.8 11.2 L6.8 2.2 L5.1 0 L0 0 M12.6 2.2 L14.3 0 L17.7 0 L19.4 2.2 L19.4 5 L12.6 13.5 L19.4 13.5 M25.2 0 L32 0 L27.8 13.5" transform="translate(1476.8 395.2)" stroke="#c39b08" stroke-width="1.5" fill="none" stroke-linejoin="round" stroke-linecap="round"/>
<rect x="1467" y="424.5" width="28" height="21" fill="#0020ff"/>
<rect x="1428" y="442" width="28" height="20.5" fill="#0020ff"/>
<rect x="1467" y="459" width="28" height="21" fill="#0020ff"/>
<path d="M1465 425 H1452 Q1448.5 425 1448.5 428 V439 M1448.5 465 V478.5 H1466 M1474 447.5 V457" stroke="#c39b08" stroke-width="2" fill="none" />
<circle cx="1470.5" cy="478" r="3" fill="#35c8f0"/>
<path d="M1461.5 502 V485 H1535 V502" stroke="#c39b08" stroke-width="2.4" fill="none" />
<rect x="1465.5" y="487.5" width="64.5" height="14.5" fill="#0020ff"/>
<circle cx="1567.5" cy="478" r="3.6" fill="#c39b08"/>
<path d="M1559 603 V485 H1631.5 V603 Z" stroke="#c39b08" stroke-width="2.4" fill="none" />
<rect x="1563" y="487.5" width="64" height="36.5" fill="#0020ff"/>
<rect x="1616" y="533" width="11" height="17" fill="#0020ff"/>
<rect x="1616" y="560" width="11" height="36" fill="#0020ff"/>
<path d="M0 0 L0 11.2 L1.7 13.5 L5.1 13.5 L6.8 11.2 L6.8 0 M19 0 L12.2 0 L12.2 5.6 L17.3 5.6 L19 7.9 L19 11.2 L17.3 13.5 L13.9 13.5 L12.2 11.2 M31.2 0 L24.5 0 L24.5 5.6 L29.6 5.6 L31.2 7.9 L31.2 11.2 L29.6 13.5 L26.2 13.5 L24.5 11.2 M43.5 0 L36.8 0 L36.8 5.6 L41.8 5.6 L43.5 7.9 L43.5 11.2 L41.8 13.5 L38.4 13.5 L36.8 11.2" transform="translate(1654.8 526.8)" stroke="#c39b08" stroke-width="1.5" fill="none" stroke-linejoin="round" stroke-linecap="round"/>
<rect x="1600" y="604" width="144.5" height="108" fill="none" stroke="#ff1a00" stroke-width="2.2"/>
<rect x="1601.5" y="605.5" width="141.5" height="105" fill="none" stroke="#5fae10" stroke-width="1.2"/>
<rect x="1602.5" y="606.5" width="139.5" height="103" fill="none" stroke="#c39b08" stroke-width="1"/>
<rect x="1698" y="607.5" width="43" height="101" fill="#0020ff"/>
<path d="M0 13.5 L0 0 L5.1 0 L6.8 2.2 L6.8 5 L5.1 7.2 L0 7.2 M3.4 7.2 L6.8 13.5 M14.9 0 L18.2 13.5 L21.6 0 M29.8 0 L36.5 0 L32.8 5.6 L34.8 5.6 L36.5 7.9 L36.5 11.2 L34.8 13.5 L31.4 13.5 L29.8 11.2" transform="translate(1638.8 719.8)" stroke="#c39b08" stroke-width="1.5" fill="none" stroke-linejoin="round" stroke-linecap="round"/>
<circle cx="1625" cy="795" r="15.7" fill="#0020ff"/>
<circle cx="1673" cy="795" r="15.7" fill="#0020ff"/>
<circle cx="1723" cy="795" r="15.7" fill="#0020ff"/>
<circle cx="1648" cy="844.5" r="15.7" fill="#0020ff"/>
<circle cx="1697" cy="844.5" r="15.7" fill="#0020ff"/>
<path d="M1727.5 78 V85.5 H1760" stroke="#c39b08" stroke-width="2" fill="none" />
<rect x="1742" y="76" width="14" height="7.5" fill="#0020ff"/>
<rect x="150" y="969" width="1610" height="4.2" fill="#0020ff"/>
<path d="M1088 501 L1447 466.5 L1499 465.3 L1535 500 M1455.5 466 V499.5 H1499 V465.5 M1451 502 L1455.5 499.5" stroke="#fff" stroke-width="1" fill="none" /></g></svg>
<div style="left:0px;top:0px;width:1920px;height:23px;background:linear-gradient(90deg,#4a545a 0px,#3e484e 200px,#363f45 400px,#2e363c 560px,#161c22 610px,#0e141a 800px,#1a2228 840px,#242c32 900px,#1c242a 1000px,#182028 1100px,#3a4248 1135px,#565c62 1165px,#4a5056 1200px,#2a3238 1235px,#161e26 1300px,#121a22 1380px,#222a30 1440px,#1a2228 1520px,#121a22 1580px,#262e34 1660px,#2c3438 1800px,#242c32 1920px);"></div>
<div style="left:0px;top:0px;width:1920px;height:23px;background:linear-gradient(180deg,rgba(0,0,0,0.25) 0,rgba(0,0,0,0) 6px,rgba(0,0,0,0) 16px,rgba(0,0,0,0.15) 23px);"></div>
<div style="left:0px;top:20px;width:1920px;height:1px;background:rgba(255,255,255,0.3);"></div>
<div style="left:-12px;top:4px;width:436px;height:13px;background:linear-gradient(90deg,rgba(255,255,255,1) 0,rgba(255,255,255,0.98) 250px,rgba(255,255,255,0.8) 330px,rgba(255,255,255,0.72) 436px);border-radius:9px;filter:blur(4.5px);"></div>
<div style="left:-12px;top:6px;width:300px;height:9px;background:rgba(255,255,255,0.9);border-radius:6px;filter:blur(3px);"></div>
<div style="left:420px;top:0px;width:40px;height:22px;background:radial-gradient(ellipse at 50% 60%,rgba(40,140,60,0.6),rgba(40,140,60,0) 70%);"></div>
<div style="left:462px;top:4px;width:40px;height:18px;background:radial-gradient(ellipse at 50% 60%,rgba(40,140,60,0.6),rgba(40,140,60,0) 70%);"></div>
<div style="left:2px;top:4px;width:14px;height:14px;background:#fff;border:1px solid #222;border-top:3px solid #1a2a8a;"></div>
<svg width="20" height="22" style="left:0;top:0"><path d="M5 10 L13 16 M13 9 L5 16" stroke="#b8b800" stroke-width="2.4" fill="none"/><path d="M5 10 L13 16 M13 9 L5 16" stroke="#dede20" stroke-width="1.2" fill="none"/></svg>
<div style="left:21px;top:2px;width:500px;height:18px;font-family:'Liberation Sans', sans-serif;font-size:12.85px;line-height:18px;color:#000;white-space:pre;">Graphic Editor 9.07b2 (00@HY-HYCAM-PC153 - Windows, pid:6204)</div>
<div style="left:1813px;top:0px;width:101px;height:18px;border:1px solid rgba(255,255,255,0.45);border-top:none;border-radius:0 0 5px 5px;background:linear-gradient(180deg,rgba(160,170,180,0.55),rgba(90,100,110,0.45) 50%,rgba(50,60,70,0.5) 51%,rgba(80,90,100,0.5));"></div>
<div style="left:1841px;top:0px;width:1px;height:17px;background:rgba(255,255,255,0.4);"></div>
<div style="left:1868px;top:0px;width:1px;height:17px;background:rgba(255,255,255,0.4);"></div>
<div style="left:1823px;top:9px;width:11px;height:4px;background:#fff;border:1px solid #555;border-radius:1px;"></div>
<div style="left:1850px;top:5px;width:8px;height:8px;border:2px solid #fff;outline:1px solid #555;"></div>
<div style="left:1853px;top:3px;width:8px;height:8px;border:2px solid #fff;border-left-color:transparent;border-bottom-color:transparent;"></div>
<svg width="1920" height="22" style="left:0;top:0"><path d="M1889 4 L1899 13 M1899 4 L1889 13" stroke="#444" stroke-width="4.5" fill="none"/><path d="M1889 4 L1899 13 M1899 4 L1889 13" stroke="#fff" stroke-width="2.6" fill="none"/></svg>
<div style="left:0px;top:21px;width:1920px;height:3px;background:#3a4a4c;"></div>
<div style="left:0px;top:22px;width:1920px;height:57px;background:#2d4f4a;"></div>
<div style="left:0px;top:76px;width:1920px;height:2px;background:#d0eeee;"></div>
<div style="left:2px;top:24px;width:1502px;height:52px;background:#9edbdb;border-style:solid;border-width:2px;border-color:#d6f6f6 #5f9a9a #4f8a8a #d6f6f6;"></div>
<div style="left:1504px;top:24px;width:3px;height:54px;background:#3f7f77;"></div>
<div style="left:1507px;top:24px;width:1410px;height:53px;background:#9edbdb;border-style:solid;border-width:2px;border-color:#d6f6f6 #5f9a9a #4f8a8a #d6f6f6;width:410px;"></div>
<div style="left:1917px;top:22px;width:3px;height:58px;background:#2d4f4a;"></div>
<div class="s" style="left:15.7px;top:40px;width:100px;height:20px;font-size:15px;line-height:18px;letter-spacing:-0.22px;transform:scaleX(1.05);transform-origin:0 0;">File</div>
<div style="left:15.7px;top:57px;width:9px;height:1px;background:#000;height:1.5px;"></div>
<div class="s" style="left:57.3px;top:40px;width:100px;height:20px;font-size:15px;line-height:18px;letter-spacing:-0.22px;transform:scaleX(0.96);transform-origin:0 0;">Edit</div>
<div style="left:57.3px;top:57px;width:9px;height:1px;background:#000;height:1.5px;"></div>
<div class="s" style="left:99px;top:40px;width:100px;height:20px;font-size:15px;line-height:18px;letter-spacing:-0.22px;transform:scaleX(0.987);transform-origin:0 0;">Actions</div>
<div style="left:99px;top:57px;width:11px;height:1px;background:#000;height:1.5px;"></div>
<div class="s" style="left:162.3px;top:40px;width:100px;height:20px;font-size:15px;line-height:18px;letter-spacing:-0.22px;transform:scaleX(0.97);transform-origin:0 0;">Options</div>
<div class="s" style="left:227.3px;top:40px;width:100px;height:20px;font-size:15px;line-height:18px;letter-spacing:-0.22px;transform:scaleX(0.99);transform-origin:0 0;">Analysis</div>
<div class="s" style="left:296.7px;top:40px;width:100px;height:20px;font-size:15px;line-height:18px;letter-spacing:-0.22px;transform:scaleX(0.97);transform-origin:0 0;">DFM</div>
<div class="s" style="left:346px;top:40px;width:100px;height:20px;font-size:15px;line-height:18px;letter-spacing:-0.22px;transform:scaleX(1.026);transform-origin:0 0;">Step</div>
<div style="left:346px;top:57px;width:9px;height:1px;background:#000;height:1.5px;"></div>
<div class="s" style="left:391.7px;top:40px;width:100px;height:20px;font-size:15px;line-height:18px;letter-spacing:-0.22px;transform:scaleX(0.948);transform-origin:0 0;">Rout</div>
<div style="left:391.7px;top:57px;width:10px;height:1px;background:#000;height:1.5px;"></div>
<div class="s" style="left:437.3px;top:40px;width:100px;height:20px;font-size:15px;line-height:18px;letter-spacing:-0.22px;transform:scaleX(0.943);transform-origin:0 0;">Windows</div>
<div style="left:437.3px;top:57px;width:14px;height:1px;background:#000;height:1.5px;"></div>
<div class="s" style="left:1460px;top:40px;width:100px;height:20px;font-size:15px;line-height:18px;letter-spacing:-0.22px;transform:scaleX(1.0);transform-origin:0 0;">Help</div>
<svg width="1920" height="80" style="left:0;top:0"><path d="M1519 39.3 L1533.0 38.4 L1536.0 40.6 L1519 40.2 Z" fill="#e8201c"/><path d="M1516 43.8 L1532.8 42.9 L1535.2 45.1 L1516 44.7 Z" fill="#e8201c"/><path d="M1514 48.3 L1532.6 47.4 L1534.4 49.6 L1514 49.2 Z" fill="#e8201c"/><path d="M1513 52.8 L1532.4 51.9 L1533.6 54.1 L1513 53.7 Z" fill="#e8201c"/><path d="M1512 57.3 L1532.2 56.4 L1532.8 58.6 L1512 58.2 Z" fill="#e8201c"/><text x="1532" y="60" font-family="Liberation Sans" font-weight="bold" font-style="italic" font-size="29" fill="#17177f" textLength="139" lengthAdjust="spacingAndGlyphs">Frontline</text><circle cx="1576" cy="52" r="8.2" fill="#9edbdb" stroke="#17177f" stroke-width="2.4"/><path d="M1576 48.2 L1579.8 52 L1576 55.8 L1572.2 52 Z" fill="#e8201c"/></svg>
<div class="s" style="left:1676px;top:26px;width:150px;height:26px;font-size:25px;line-height:26px;letter-spacing:-0.2px;">Genesis 2000</div>
<div class="s" style="left:1700px;top:56px;width:120px;height:16px;font-size:14.5px;line-height:16px;font-style:italic;">Graphic Editor</div>
<div class="m" style="left:1817px;top:28px;width:110px;height:14px;font-size:13.5px;line-height:14px;font-style:italic;letter-spacing:0.7px;"><span style="font-family:'Liberation Sans';letter-spacing:1.3px">0</span>3 Aug 2<span style="font-family:'Liberation Sans';letter-spacing:1.3px">0</span>19</div>
<div class="m" style="left:1831px;top:43px;width:110px;height:14px;font-size:13.5px;line-height:14px;font-style:italic;letter-spacing:0.7px;"><span style="font-family:'Liberation Sans';letter-spacing:1.3px">0</span>8:12 PM</div>
<div style="left:0px;top:78px;width:156px;height:897px;background:#55c9ae;border-left:1px solid #1e3f3a;"></div>
<div style="left:1px;top:78px;width:4px;height:897px;background:#3c8e7a;"></div>
<div style="left:153px;top:78px;width:2px;height:897px;background:#a6f0dc;"></div>
<div style="left:155px;top:78px;width:2px;height:897px;background:#081210;"></div>
<div style="left:0px;top:78px;width:156px;height:2px;background:#2d4f4a;"></div>
<div style="left:3px;top:80px;width:150px;height:39px;background:#1f5a4c;"></div>
<div style="left:4px;top:81px;width:148px;height:18px;background:#9edbdb;border:1px solid #000;"></div>
<div style="left:4px;top:100px;width:148px;height:18px;background:#9edbdb;border:1px solid #000;"></div>
<div class="m" style="left:6px;top:82px;width:150px;height:16px;font-size:14px;line-height:16px;letter-spacing:0.6px;">Job : ab323<span style="font-family:'Liberation Sans';letter-spacing:1.2px">0</span>11a<span style="font-family:'Liberation Sans';letter-spacing:1.2px">0</span></div>
<div class="m" style="left:6px;top:101px;width:150px;height:16px;font-size:14px;line-height:16px;letter-spacing:0.6px;">Step: cam</div>
<div style="left:3px;top:121px;width:150px;height:27px;background:#55c9ae;border:1px solid #1f5a4c;"></div>
<div style="left:6px;top:124px;width:144px;height:21px;background:#9edbdb;border-style:solid;border-width:2px;border-color:#d0f2f2 #4f9090 #4f9090 #d0f2f2;"></div>
<div class="m" style="left:10px;top:127px;width:140px;height:16px;font-size:14px;line-height:16px;letter-spacing:0.4px;">Job Matrix ...</div>
<div style="left:1px;top:150px;width:152px;height:2px;background:#3c8e7a;"></div>
<div style="left:5px;top:153px;width:124px;height:762px;background:#55c9ae;border-style:solid;border-width:2px;border-color:#2a6b5a #b8f4e4 #b8f4e4 #2a6b5a;"></div>
<div style="left:6px;top:155px;width:120px;height:749px;background:#000;border:1px solid #1d4c40;"></div>
<div class="row" style="top:157px"><div class="cb"><i></i></div><div class="cc" style="background:#ff0000"></div><div class="nm" style="background:#fff">to</div><svg width="118" height="16"><path d="M106 12.2 L106.3 8.5 L108.5 6.5 L109 4.8 L110.2 4.8 L110.2 7.4 L113.2 8 L112.6 9.4 L110.5 12.2 Z" fill="#000"/></svg></div>
<div class="row" style="top:173px"><div class="cb"><i></i></div><div class="cc" style="background:#0020ff"></div><div class="nm" style="background:#0a9c7b">ts</div></div>
<div class="row" style="top:189px"><div class="cb"><i></i></div><div class="nm" style="background:#ffc34d">cs</div></div>
<div class="row" style="top:205px"><div class="cb"><i></i></div><div class="nm" style="background:#ffc34d">sig2t</div><svg width="118" height="16"><path d="M106 12.2 L106.3 8.5 L108.5 6.5 L109 4.8 L110.2 4.8 L110.2 7.4 L113.2 8 L112.6 9.4 L110.5 12.2 Z" fill="#000"/></svg></div>
<div class="row" style="top:221px"><div class="cb"><i></i></div><div class="nm" style="background:#ffc34d">sig3b</div></div>
<div class="row" style="top:237px"><div class="cb"><i></i></div><div class="nm" style="background:#ffc34d">sig4t</div></div>
<div class="row" style="top:253px"><div class="cb"><i></i></div><div class="nm" style="background:#ffc34d">sig5b</div><svg width="118" height="16"><path d="M106 12.2 L106.3 8.5 L108.5 6.5 L109 4.8 L110.2 4.8 L110.2 7.4 L113.2 8 L112.6 9.4 L110.5 12.2 Z" fill="#000"/></svg></div>
<div class="row" style="top:269px"><div class="cb"><i></i></div><div class="nm" style="background:#ffc34d">sig6t</div><svg width="118" height="16"><path d="M106 12.2 L106.3 8.5 L108.5 6.5 L109 4.8 L110.2 4.8 L110.2 7.4 L113.2 8 L112.6 9.4 L110.5 12.2 Z" fill="#000"/></svg></div>
<div class="row" style="top:285px"><div class="cb"><i></i></div><div class="nm" style="background:#ffc34d">sig7b</div></div>
<div class="row" style="top:301px"><div class="cb"><i></i></div><div class="nm" style="background:#ffc34d">sig8t</div></div>
<div class="row" style="top:317px"><div class="cb"><i></i></div><div class="nm" style="background:#ffc34d">sig9b</div><svg width="118" height="16"><path d="M106 12.2 L106.3 8.5 L108.5 6.5 L109 4.8 L110.2 4.8 L110.2 7.4 L113.2 8 L112.6 9.4 L110.5 12.2 Z" fill="#000"/></svg></div>
<div class="row" style="top:333px"><div class="cb"><i></i></div><div class="nm" style="background:#ffc34d">ss</div><svg width="118" height="16"><path d="M106 12.2 L106.3 8.5 L108.5 6.5 L109 4.8 L110.2 4.8 L110.2 7.4 L113.2 8 L112.6 9.4 L110.5 12.2 Z" fill="#000"/></svg></div>
<div class="row" style="top:349px"><div class="cb"><i></i></div><div class="nm" style="background:#0a9c7b">bs</div></div>
<div class="row" style="top:365px"><div class="cb"><i></i></div><div class="nm" style="background:#fff">bo</div><svg width="118" height="16"><path d="M106 12.2 L106.3 8.5 L108.5 6.5 L109 4.8 L110.2 4.8 L110.2 7.4 L113.2 8 L112.6 9.4 L110.5 12.2 Z" fill="#000"/></svg></div>
<div style="left:7px;top:382px;width:118px;height:3px;background:#2a6b5a;border-top:1px solid #000;border-bottom:1px solid #000;"></div>
<div class="row" style="top:386px"><div class="cb"><i></i></div><div class="nm" style="background:#9edbdb">bo1</div></div>
<div class="row" style="top:402px"><div class="cb"><i></i></div><div class="nm" style="background:#9edbdb">bo2</div></div>
<div style="left:7px;top:418px;width:118px;height:4px;background:#2a6b5a;border-top:1px solid #000;border-bottom:1px solid #000;"></div>
<div class="row" style="top:423px"><div class="cb"><i></i></div><div class="nm" style="background:#a9b7bf">drl</div></div>
<div style="left:7px;top:439px;width:118px;height:4px;background:#2a6b5a;border-top:1px solid #000;border-bottom:1px solid #000;"></div>
<div class="row" style="top:444px"><div class="cb"><i></i></div><div class="nm" style="background:#9edbdb">cvia</div></div>
<div class="row" style="top:460px"><div class="cb"><i></i></div><div class="nm" style="background:#9edbdb">ydkdrl</div></div>
<div style="left:7px;top:476px;width:118px;height:4px;background:#2a6b5a;border-top:1px solid #000;border-bottom:1px solid #000;"></div>
<div class="row" style="top:481px"><div class="cb"><i></i></div><div class="nm" style="background:#dcdcdc">rout</div></div>
<div style="left:7px;top:497px;width:118px;height:4px;background:#2a6b5a;border-top:1px solid #000;border-bottom:1px solid #000;"></div>
<div class="row" style="top:502px"><div class="cb"><i></i></div><div class="nm" style="background:#9edbdb">bp</div></div>
<div class="row" style="top:518px"><div class="cb"><i></i></div><div class="nm" style="background:#9edbdb">outline</div></div>
<div class="row" style="top:534px"><div class="cb"><i></i></div><div class="nm" style="background:#9edbdb">tp</div></div>
<div class="row" style="top:550px"><div class="cb"><i></i></div><div class="nm" style="background:#9edbdb">v-cut</div></div>
<div class="row" style="top:566px"><div class="cb"><i></i></div><div class="nm" style="background:#9edbdb">npth</div></div>
<div class="row" style="top:582px"><div class="cb"><i></i></div><div class="nm" style="background:#9edbdb">gbdrl</div></div>
<div class="row" style="top:598px"><div class="cb" style="background:#fff;border-color:#1414b4;outline:1px solid #1414b4;"><i style="border-color:#1414b4;border-width:2px;"></i></div><div class="cc" style="background:#3f9a00"></div><div class="nm" style="background:#9edbdb">to<span style="font-family:'Liberation Sans';letter-spacing:-0.25px">0</span></div><svg width="118" height="16"><path d="M99 12.2 L99.3 8.5 L101.5 6.5 L102 4.8 L103.2 4.8 L103.2 7.4 L106.2 8 L105.6 9.4 L103.5 12.2 Z" fill="#000"/><rect x="109" y="6.2" width="5" height="5" fill="#000"/><rect x="110" y="7.2" width="1.2" height="1.2" fill="#fff"/><rect x="111.9" y="7.2" width="1.2" height="1.2" fill="#fff"/><rect x="110" y="9.1" width="1.2" height="1.2" fill="#fff"/><rect x="111.9" y="9.1" width="1.2" height="1.2" fill="#fff"/></svg></div>
<div class="row" style="top:614px"><div class="cb"><i></i></div><div class="nm" style="background:#9edbdb">ts<span style="font-family:'Liberation Sans';letter-spacing:-0.25px">0</span></div></div>
<div class="row" style="top:630px"><div class="cb"><i></i></div><div class="nm" style="background:#9edbdb">cs<span style="font-family:'Liberation Sans';letter-spacing:-0.25px">0</span></div></div>
<div class="row" style="top:646px"><div class="cb"><i></i></div><div class="nm" style="background:#9edbdb">sig2t<span style="font-family:'Liberation Sans';letter-spacing:-0.25px">0</span></div><svg width="118" height="16"><path d="M106 12.2 L106.3 8.5 L108.5 6.5 L109 4.8 L110.2 4.8 L110.2 7.4 L113.2 8 L112.6 9.4 L110.5 12.2 Z" fill="#000"/></svg></div>
<div class="row" style="top:662px"><div class="cb"><i></i></div><div class="nm" style="background:#9edbdb">sig3b<span style="font-family:'Liberation Sans';letter-spacing:-0.25px">0</span></div></div>
<div class="row" style="top:678px"><div class="cb"><i></i></div><div class="nm" style="background:#9edbdb">sig4t<span style="font-family:'Liberation Sans';letter-spacing:-0.25px">0</span></div></div>
<div class="row" style="top:694px"><div class="cb"><i></i></div><div class="nm" style="background:#9edbdb">sig5b<span style="font-family:'Liberation Sans';letter-spacing:-0.25px">0</span></div><svg width="118" height="16"><path d="M106 12.2 L106.3 8.5 L108.5 6.5 L109 4.8 L110.2 4.8 L110.2 7.4 L113.2 8 L112.6 9.4 L110.5 12.2 Z" fill="#000"/></svg></div>
<div class="row" style="top:710px"><div class="cb"><i></i></div><div class="nm" style="background:#9edbdb">sig6t<span style="font-family:'Liberation Sans';letter-spacing:-0.25px">0</span></div><svg width="118" height="16"><path d="M106 12.2 L106.3 8.5 L108.5 6.5 L109 4.8 L110.2 4.8 L110.2 7.4 L113.2 8 L112.6 9.4 L110.5 12.2 Z" fill="#000"/></svg></div>
<div class="row" style="top:726px"><div class="cb"><i></i></div><div class="nm" style="background:#9edbdb">sig7b<span style="font-family:'Liberation Sans';letter-spacing:-0.25px">0</span></div></div>
<div class="row" style="top:742px"><div class="cb"><i></i></div><div class="nm" style="background:#9edbdb">sig8t<span style="font-family:'Liberation Sans';letter-spacing:-0.25px">0</span></div></div>
<div class="row" style="top:758px"><div class="cb"><i></i></div><div class="nm" style="background:#9edbdb">sig9b<span style="font-family:'Liberation Sans';letter-spacing:-0.25px">0</span></div><svg width="118" height="16"><path d="M106 12.2 L106.3 8.5 L108.5 6.5 L109 4.8 L110.2 4.8 L110.2 7.4 L113.2 8 L112.6 9.4 L110.5 12.2 Z" fill="#000"/></svg></div>
<div class="row" style="top:774px"><div class="cb"><i></i></div><div class="nm" style="background:#9edbdb">ss<span style="font-family:'Liberation Sans';letter-spacing:-0.25px">0</span></div><svg width="118" height="16"><path d="M106 12.2 L106.3 8.5 L108.5 6.5 L109 4.8 L110.2 4.8 L110.2 7.4 L113.2 8 L112.6 9.4 L110.5 12.2 Z" fill="#000"/></svg></div>
<div class="row" style="top:790px"><div class="cb"><i></i></div><div class="nm" style="background:#9edbdb">bs<span style="font-family:'Liberation Sans';letter-spacing:-0.25px">0</span></div></div>
<div class="row" style="top:806px"><div class="cb"><i></i></div><div class="nm" style="background:#9edbdb">bo<span style="font-family:'Liberation Sans';letter-spacing:-0.25px">0</span></div><svg width="118" height="16"><path d="M106 12.2 L106.3 8.5 L108.5 6.5 L109 4.8 L110.2 4.8 L110.2 7.4 L113.2 8 L112.6 9.4 L110.5 12.2 Z" fill="#000"/></svg></div>
<div class="row" style="top:822px"><div class="cb"><i></i></div><div class="nm" style="background:#9edbdb">drl<span style="font-family:'Liberation Sans';letter-spacing:-0.25px">0</span></div></div>
<div class="row" style="top:838px"><div class="cb"><i></i></div><div class="nm" style="background:#9edbdb">rout<span style="font-family:'Liberation Sans';letter-spacing:-0.25px">0</span></div></div>
<div class="row" style="top:854px"><div class="cb"><i></i></div><div class="nm" style="background:#9edbdb">bp<span style="font-family:'Liberation Sans';letter-spacing:-0.25px">0</span></div></div>
<div class="row" style="top:870px"><div class="cb"><i></i></div><div class="nm" style="background:#9edbdb">outline<span style="font-family:'Liberation Sans';letter-spacing:-0.25px">0</span></div></div>
<div class="row" style="top:886px"><div class="cb"><i></i></div><div class="nm" style="background:#9edbdb">tp<span style="font-family:'Liberation Sans';letter-spacing:-0.25px">0</span></div></div>
<div style="left:1px;top:951px;width:153px;height:2px;background:#a6f0dc;"></div>
<div style="left:3px;top:953px;width:150px;height:18px;background:#ffc34d;border:1px solid #2a2a00;"></div>
<div class="m" style="left:6px;top:954px;width:140px;height:16px;font-size:13px;line-height:16px;letter-spacing:-0.8px;">Selected : <span style="font-family:'Liberation Sans';letter-spacing:-0.25px">0</span></div>
<div style="left:1755px;top:78px;width:165px;height:897px;background:#55c9ae;"></div>
<div style="left:1755px;top:78px;width:2px;height:897px;background:#2a6b5a;"></div>
<div style="left:1757px;top:78px;width:163px;height:3px;background:#2f6a5a;"></div>
<div style="left:1757px;top:80px;width:163px;height:161px;background:#0c1c1a;"></div>
<div style="left:1757px;top:240px;width:163px;height:4px;background:#7fd8c4;"></div>
<div style="left:1757px;top:243px;width:163px;height:243px;background:#4a4a4a;"></div>
<div class="tb" style="left:1758.5px;top:81px"><b></b><svg width="38" height="38" style="left:-2px;top:-2px"><rect x="12.3" y="13.1" width="15" height="14.2" stroke="#000" fill="none" stroke-width="1.8"/><path d="M19.8 5.8 L25.2 10 H23 V17 H16.5 V10 H14.4 Z" fill="#000"/></svg></div>
<div class="tb" style="left:1798.5px;top:81px"><b></b><svg width="38" height="38" style="left:-2px;top:-2px"><rect x="12.2" y="10.8" width="15" height="14.4" stroke="#000" fill="none" stroke-width="1.8"/><path d="M19.6 32.2 L25.2 27.8 H23 V21 H16.6 V27.8 H14.1 Z" fill="#000"/></svg></div>
<div class="tb" style="left:1838.5px;top:81px"><b></b><svg width="38" height="38" style="left:-2px;top:-2px"><path d="M8.5 18.5 L19 8.5 L28.5 18.5 M10.5 18 V30 H26.5 V18 M18 30 V21 H23 V30 M24 13 V8 M24.5 7 L26 5.5" stroke="#000" fill="none" stroke-width="1.6"/><rect x="13" y="21" width="3" height="3" stroke="#000" fill="none" stroke-width="1"/></svg></div>
<div class="tb" style="left:1878.5px;top:81px"><b></b><svg width="38" height="38" style="left:-2px;top:-2px"><rect x="8.5" y="9" width="21.5" height="20.5" stroke="#000" fill="none" stroke-width="2"/><path d="M19.5 9 V29.5 M8.5 23.8 H30" stroke="#000" fill="none" stroke-width="1.3"/><text x="20.8" y="22" font-size="6" font-weight="bold" font-family="Liberation Sans" fill="#000">xy</text></svg></div>
<div class="tb" style="left:1758.5px;top:121px"><b></b><svg width="38" height="38" style="left:-2px;top:-2px"><rect x="13.3" y="11" width="15" height="15" stroke="#000" fill="none" stroke-width="1.8"/><path d="M6.2 18.4 L9.9 13 V15 H17.2 V21.9 H9.9 V23.9 Z" fill="#000"/></svg></div>
<div class="tb" style="left:1798.5px;top:121px"><b></b><svg width="38" height="38" style="left:-2px;top:-2px"><rect x="10.1" y="11" width="15" height="15" stroke="#000" fill="none" stroke-width="1.8"/><path d="M32.2 18.4 L28.5 13 V15 H21.3 V21.9 H28.5 V23.9 Z" fill="#000"/></svg></div>
<div class="tb" style="left:1838.5px;top:121px"><b></b><svg width="38" height="38" style="left:-2px;top:-2px"><rect x="18.5" y="13.5" width="10.5" height="12.5" stroke="#000" fill="none" stroke-width="2"/><path d="M9 25 H11 Q14 25 14 21 V19 Q14 15.5 10.5 15.5" stroke="#000" fill="none" stroke-width="2.4"/><path d="M6 15.5 L10.8 11.5 V19.5 Z" fill="#000"/></svg></div>
<div class="tb" style="left:1878.5px;top:121px"><b></b><svg width="38" height="38" style="left:-2px;top:-2px"><path d="M30.5 12.2 H12 V19.3 H27.6 V26.2 H8.5" stroke="#000" fill="none" stroke-width="2"/><path d="M32.5 9.5 L30 12.2 L32.5 15 M5.5 23.5 L8.5 26.2 L5.5 29" stroke="#000" fill="none" stroke-width="1"/></svg></div>
<div class="tb" style="left:1758.5px;top:161px"><b></b><svg width="38" height="38" style="left:-2px;top:-2px"><rect x="12.5" y="12" width="14" height="14" stroke="#000" fill="none" stroke-width="2"/><path d="M16 4.5 H23 L19.5 8.5 Z M16 33.5 H23 L19.5 29.5 Z M4.5 15.5 V22.5 L8.8 19 Z M34 15.5 V22.5 L29.8 19 Z" fill="#000"/><path d="M17.5 3 H21.5 M17.5 35 H21.5 M3.5 17.5 V20.5 M35 17.5 V20.5" stroke="#000" stroke-width="1.6"/></svg></div>
<div class="tb" style="left:1798.5px;top:161px"><b></b><svg width="38" height="38" style="left:-2px;top:-2px"><rect x="14.5" y="15" width="8.5" height="8.5" stroke="#000" fill="none" stroke-width="1.6"/><rect x="17" y="17.5" width="3.5" height="3.5" stroke="#000" fill="none" stroke-width="1.2"/><path d="M18.7 7.5 L23 12.5 H14.5 Z M18.7 31 L23 26 H14.5 Z M6.5 19.3 L11.5 15 V23.6 Z M31 19.3 L26 15 V23.6 Z" fill="#000"/><path d="M16.5 13.2 H21 M16.5 25.3 H21 M12.3 17.2 V21.4 M25.2 17.2 V21.4" stroke="#000" stroke-width="1.4"/></svg></div>
<div class="tb" style="left:1838.5px;top:161px"><b></b><svg width="38" height="38" style="left:-2px;top:-2px"><text x="9.5" y="25" font-size="15" font-weight="bold" font-family="Liberation Sans" fill="#000" textLength="19" lengthAdjust="spacingAndGlyphs">1:2</text></svg></div>
<div class="tb" style="left:1878.5px;top:161px"><b></b><svg width="38" height="38" style="left:-2px;top:-2px"><rect x="7.5" y="8.5" width="23" height="21" stroke="#000" fill="none" stroke-width="1"/><rect x="10" y="11" width="18" height="16" stroke="#000" fill="none" stroke-width="2"/><text x="15" y="26" font-size="14" font-weight="bold" font-family="Liberation Sans" fill="#000">?</text></svg></div>
<div class="tb" style="left:1758.5px;top:201px"><b></b><svg width="38" height="38" style="left:-2px;top:-2px"><path d="M7.5 9.5 H24" stroke="#000" fill="none" stroke-width="2.2"/><path d="M29 6.5 H26 L24 8 V11 L26 12.5 H29 V11 H27 V8 H29 Z" fill="#000"/><path d="M11 14.5 H29 V18 H11 L7.5 16.2 Z" stroke="#000" fill="none" stroke-width="1.1"/><path d="M15 27 Q14.5 22 20 21.5 Q25 20 26.8 23 Q27 27 23.5 30.5 Q19 33 16.5 31 Q15 29.5 15 27 Z" stroke="#000" fill="none" stroke-width="1.1"/><circle cx="19" cy="26" r="1" stroke="#000" fill="none" stroke-width="0.8"/><circle cx="22" cy="24" r="1" stroke="#000" fill="none" stroke-width="0.8"/><circle cx="20.5" cy="28.6" r="1" stroke="#000" fill="none" stroke-width="0.8"/></svg></div>
<div class="tb" style="left:1798.5px;top:201px"><b></b><svg width="38" height="38" style="left:-2px;top:-2px"><path d="M14 5 V34 M23.8 5 V34 M5 14.5 H34 M5 24.3 H34" stroke="#d8a0a8" stroke-width="1" fill="none"/></svg></div>
<div class="rb" style="left:1838.5px;top:201px"><b></b><b style="left:4px;top:4px;width:26px;height:26px;border:1px solid #000"></b><svg width="38" height="38" style="left:-2px;top:-2px"><rect x="20.5" y="5.5" width="12" height="27" stroke="#000" fill="none" stroke-width="1.2"/><circle cx="26.3" cy="11.8" r="3.8" fill="#f00000"/><circle cx="26.3" cy="20.3" r="2.6" stroke="#000" fill="none" stroke-width="1.1"/><circle cx="26.3" cy="27.6" r="2.6" stroke="#000" fill="none" stroke-width="1.1"/><path d="M16.5 8 V26 H10.5" stroke="#0018f0" stroke-width="1.3" fill="none"/><path d="M9 17 H18.5 V33" stroke="#f00000" stroke-width="1.1" fill="none"/><path d="M8.5 5 V14" stroke="#000" stroke-width="1"/><circle cx="16.3" cy="8" r="2.4" fill="#0018f0"/><circle cx="10.3" cy="27.4" r="2.6" fill="#0018f0"/><circle cx="8.8" cy="17" r="2.3" fill="#f00000"/></svg></div>
<div class="rb" style="left:1878.5px;top:201px"><b></b><b style="left:4px;top:4px;width:26px;height:26px;border:1px solid #000"></b><svg width="38" height="38" style="left:-2px;top:-2px"><rect x="20.5" y="5.5" width="12" height="27" stroke="#000" fill="none" stroke-width="1.2"/><circle cx="26.3" cy="11.8" r="3.8" fill="#f00000"/><circle cx="26.3" cy="20.3" r="2.6" stroke="#000" fill="none" stroke-width="1.1"/><circle cx="26.3" cy="27.6" r="2.6" stroke="#000" fill="none" stroke-width="1.1"/><path d="M16.5 8 V26 H10.5 M8.5 5 V17" stroke="#000" stroke-width="1.3" fill="none"/><path d="M11 17.5 H16 M12 14.5 V17.5 M13.5 14.5 V17.5 M15 14.5 V17.5" stroke="#f00000" stroke-width="0.9" fill="none"/><circle cx="16.3" cy="8" r="2.4" fill="#000"/><circle cx="10.3" cy="27.4" r="2.6" fill="#000"/><circle cx="8.8" cy="17" r="2.3" fill="#000"/></svg></div>
<div class="wb" style="left:1758.5px;top:245px"><b></b><svg width="38" height="38" style="left:-2px;top:-2px"><rect x="11.5" y="13" width="15" height="14.5" stroke="#000" fill="none" stroke-width="1.3"/><circle cx="19.3" cy="20" r="5.6" fill="#000"/><path d="M24 13.5 L30 8" stroke="#000" stroke-width="2"/><path d="M32.5 6 L31.5 11.5 L27 7 Z" fill="#000"/></svg></div>
<div class="wb" style="left:1798.5px;top:245px"><b></b><svg width="38" height="38" style="left:-2px;top:-2px"><rect x="5" y="5" width="28" height="28" fill="#000"/><path d="M7.5 24 L17.5 8 M15 31 L30 20" stroke="#fff" stroke-width="0.9"/><rect x="17.5" y="8" width="12.5" height="12" stroke="#f00000" stroke-width="2" fill="none"/><rect x="7.5" y="24" width="7.5" height="7" stroke="#0018f0" stroke-width="1.8" fill="none"/></svg></div>
<div class="wb" style="left:1838.5px;top:245px"><b></b><svg width="38" height="38" style="left:-2px;top:-2px"><rect x="7" y="19" width="25.5" height="4.2" fill="#000"/><path d="M7.5 15 V19 M9.6 17 V19 M11.7 16 V19 M13.8 17 V19 M15.9 16 V19 M18 17 V19 M20.1 15 V19 M22.2 17 V19 M24.3 16 V19 M26.4 17 V19 M28.5 16 V19 M30.6 17 V19 M32 15 V19" stroke="#000" stroke-width="1"/></svg></div>
<div class="wb" style="left:1878.5px;top:245px"><b></b><svg width="38" height="38" style="left:-2px;top:-2px"><rect x="8" y="8.5" width="21.5" height="22.5" stroke="#000" fill="none" stroke-width="1.1" stroke-dasharray="2 1.2"/><path d="M15.4 12.7 H21.8 L26.3 17.2 V23.4 L21.8 27.9 H15.4 L10.9 23.4 V17.2 Z" fill="#000"/></svg></div>
<div class="gb" style="left:1758.5px;top:285px"><b></b><svg width="38" height="38" style="left:-2px;top:-2px"><path d="M12.3 11.7 V26.3 H26.5" stroke="#0018f0" stroke-width="3.4" fill="none"/><circle cx="12.3" cy="11.7" r="4.4" fill="#0018f0"/><circle cx="12.3" cy="26.3" r="4.4" fill="#0018f0"/><circle cx="26.5" cy="26.3" r="4.4" fill="#0018f0"/><circle cx="26.8" cy="11.3" r="4.4" fill="#f00000"/></svg></div>
<div class="gb" style="left:1798.5px;top:285px"><b></b><svg width="38" height="38" style="left:-2px;top:-2px"><rect x="15.5" y="16.6" width="7" height="7" fill="#0018b0"/><path d="M11 12.5 L27 27.5 M27 12.5 L11 27.5" stroke="#000" stroke-width="1.7"/></svg></div>
<div class="gb" style="left:1838.5px;top:285px"><b></b><svg width="38" height="38" style="left:-2px;top:-2px"><circle cx="26" cy="11.3" r="4.4" fill="#f00000"/><circle cx="11" cy="26.8" r="3.2" stroke="#0018f0" stroke-width="1.6" fill="none"/><path d="M15.0 23.0 L21.5 16.5" stroke="#000" stroke-width="1"/><path d="M21.5 16.5 L20.6 19.6 L18.4 17.4 Z" fill="#000"/></svg></div>
<div class="gb" style="left:1878.5px;top:285px"><b></b><svg width="38" height="38" style="left:-2px;top:-2px"><circle cx="26" cy="11.3" r="4.4" fill="#f00000"/><circle cx="11" cy="26.8" r="4.4" fill="#0018f0"/><path d="M15.5 22.5 L21.5 16.5" stroke="#000" stroke-width="1"/><path d="M21.5 16.5 L20.6 19.6 L18.4 17.4 Z" fill="#000"/></svg></div>
<div class="gb" style="left:1758.5px;top:325px"><b></b><svg width="38" height="38" style="left:-2px;top:-2px"><path d="M10.7 25.7 L27.2 10" stroke="#f00000" stroke-width="2.6" stroke-linecap="round"/><path d="M11.8 28.8 H29.5" stroke="#0018f0" stroke-width="2.6" stroke-linecap="round"/><path d="M28.0 24.5 L24.0 20.5" stroke="#000" stroke-width="1"/><path d="M24.0 20.5 L27.1 21.4 L24.9 23.6 Z" fill="#000"/></svg></div>
<div class="gb" style="left:1798.5px;top:325px"><b></b><svg width="38" height="38" style="left:-2px;top:-2px"><path d="M10.2 25.7 L18.5 17.8" stroke="#0018f0" stroke-width="2.6" stroke-linecap="round"/><path d="M18.5 17.8 L26.8 10" stroke="#f00000" stroke-width="2.6" stroke-linecap="round"/><path d="M21.0 25.0 L25.5 21.5" stroke="#000" stroke-width="1"/><path d="M25.5 21.5 L24.2 24.4 L22.3 22.0 Z" fill="#000"/></svg></div>
<div class="gb" style="left:1838.5px;top:325px"><b></b><svg width="38" height="38" style="left:-2px;top:-2px"><path d="M18.5 12.5 Q25 13 24.5 19.5 Q23.5 25 17 25.5" stroke="#000" fill="none" stroke-width="1.6"/><path d="M14 25.8 L18.5 22.5 L18.8 28.3 Z" fill="#000"/></svg></div>
<div class="gb" style="left:1878.5px;top:325px"><b></b><svg width="38" height="38" style="left:-2px;top:-2px"><path d="M18.9 9.5 V30" stroke="#000" stroke-width="1.1"/><path d="M8 12.3 H16.2 V26.5 M9.5 19.5 H16.2" stroke="#1a22f0" stroke-width="2.2" fill="none"/><path d="M15.2 12 V26.5" stroke="#8a8af8" stroke-width="1"/><path d="M31.5 12.3 H22.8 V26.5 M22.8 19.5 H30" stroke="#e02030" stroke-width="2.2" fill="none"/></svg></div>
<div class="gb" style="left:1758.5px;top:365px"><b></b><svg width="38" height="38" style="left:-2px;top:-2px"><rect x="21.7" y="6" width="11" height="10.2" fill="#f00000"/><circle cx="27.2" cy="10.8" r="2.9" fill="#d2d2d2"/><rect x="7" y="21.5" width="10" height="10" stroke="#0018f0" stroke-width="1.1" fill="none"/><circle cx="11.9" cy="26.6" r="3.3" fill="#0018f0"/><path d="M17.5 20.5 L21.0 17.0" stroke="#000" stroke-width="1"/><path d="M21.0 17.0 L20.1 20.1 L17.9 17.9 Z" fill="#000"/></svg></div>
<div class="gb" style="left:1798.5px;top:365px"><b></b><svg width="38" height="38" style="left:-2px;top:-2px"><path d="M8.7 18.6 H29" stroke="#f00000" stroke-width="2.6" stroke-linecap="round"/><path d="M16.5 18.6 H21.5" stroke="#0018f0" stroke-width="2.6"/></svg></div>
<div class="gb" style="left:1838.5px;top:365px"><b></b><svg width="38" height="38" style="left:-2px;top:-2px"><path d="M8.7 8.3 V30.4 M29.1 8.3 V30.4" stroke="#000" stroke-width="1.2"/><path d="M9.5 18.9 H15.5 M22.5 18.9 H28.3 M12 16.6 L9.7 18.9 L12 21.2 M26 16.6 L28.3 18.9 L26 21.2" stroke="#0018f0" stroke-width="1" fill="none"/><rect x="15.7" y="14.8" width="6.6" height="8.4" stroke="#0018f0" stroke-width="1.1" fill="none"/><path d="M20 16.3 L17.5 20.3 H20.8 M20 16.3 V22" stroke="#0018f0" stroke-width="0.9" fill="none"/></svg></div>
<div class="gb" style="left:1878.5px;top:365px"><b></b><svg width="38" height="38" style="left:-2px;top:-2px"><path d="M8 10 H22 V17 H29 V29 H16.5 V21.8 H8 Z" fill="#0018f0"/><circle cx="13.7" cy="15" r="3" fill="#d2d2d2"/><circle cx="22.3" cy="23.3" r="4" fill="#d2d2d2"/></svg></div>
<div class="gb" style="left:1758.5px;top:405px"><b></b><svg width="38" height="38" style="left:-2px;top:-2px"><path d="M9.5 26 L21.7 13.4 L30 26" stroke="#f00000" stroke-width="2.2" fill="none" stroke-linejoin="round"/><path d="M9 26.6 H30.4" stroke="#0018f0" stroke-width="2.2"/><path d="M20.8 26 V20 M18.3 22.5 L20.8 19 L23.3 22.5" stroke="#000" stroke-width="1.3" fill="none"/></svg></div>
<div class="gb" style="left:1798.5px;top:405px"><b></b><svg width="38" height="38" style="left:-2px;top:-2px"><path d="M6.5 33 L18.1 7.5 L30.5 33" stroke="#f00000" stroke-width="2.2" fill="none"/><path d="M9.5 33 L18.1 23 L27.5 33" stroke="#0018f0" stroke-width="2.2" fill="none"/><path d="M18.3 21.5 V15.5 M15.8 18.0 L18.3 14.5 L20.8 18.0" stroke="#000" stroke-width="1.3" fill="none"/></svg></div>
<div class="gb" style="left:1838.5px;top:405px"><b></b><svg width="38" height="38" style="left:-2px;top:-2px"><path d="M10.4 23 L14.8 10.5 H23.3 L28 23" stroke="#f00000" stroke-width="2.4" fill="none"/><path d="M6.5 33 L9 24.3 H29.6 L32 33" stroke="#0018f0" stroke-width="2.4" fill="none"/><path d="M19 21.5 V15.5 M16.5 18.0 L19 14.5 L21.5 18.0" stroke="#000" stroke-width="1.3" fill="none"/></svg></div>
<div class="gb" style="left:1878.5px;top:405px"><b></b><svg width="38" height="38" style="left:-2px;top:-2px"><path d="M10.4 23 L14.8 10.5 H23.3 L28 23" stroke="#f00000" stroke-width="2.4" fill="none"/><path d="M5 24.6 H34" stroke="#0018f0" stroke-width="2.6" fill="none"/><path d="M7 21.5 L12.5 28 M12.5 21.5 L7 28 M26 21.5 L31.5 28 M31.5 21.5 L26 28" stroke="#000" stroke-width="0.9"/><path d="M19 21.5 V15.5 M16.5 18.0 L19 14.5 L21.5 18.0" stroke="#000" stroke-width="1.3" fill="none"/></svg></div>
<div class="ob" style="left:1758.5px;top:445px"><b></b><svg width="38" height="38" style="left:-2px;top:-2px"><path d="M14.8 9.5 L14.8 22.7 L18.2 19.8 L21.0 26.3 L23.9 25.1 L21.0 18.9 L25.6 18.9 Z" fill="#000" transform="rotate(-11 14.8 9.5)"/></svg></div>
<div class="ob" style="left:1798.5px;top:445px"><b></b><svg width="38" height="38" style="left:-2px;top:-2px"><rect x="9" y="8" width="20.5" height="20.5" stroke="#e82000" stroke-width="2.4" fill="none"/><path d="M15.3 9.8 L15.3 23.0 L18.7 20.1 L21.5 26.6 L24.4 25.4 L21.5 19.2 L26.1 19.2 Z" fill="#000" transform="rotate(-11 15.3 9.8)"/></svg></div>
<div class="ob" style="left:1838.5px;top:445px"><b></b><svg width="38" height="38" style="left:-2px;top:-2px"><path d="M14 8 H29 V28.5 H15 L9.5 23 V12.5 Z" stroke="#e82000" stroke-width="2.4" fill="none"/><path d="M15.3 9.8 L15.3 23.0 L18.7 20.1 L21.5 26.6 L24.4 25.4 L21.5 19.2 L26.1 19.2 Z" fill="#000" transform="rotate(-11 15.3 9.8)"/></svg></div>
<div class="ob" style="left:1878.5px;top:445px"><b></b><svg width="38" height="38" style="left:-2px;top:-2px"><path d="M10.2 5.5 V19" stroke="#000" stroke-width="1.1"/><path d="M9.5 28.3 H15 V18.9 H18.9 V11.5 H27" stroke="#000" stroke-width="1.1" fill="none"/><circle cx="9.9" cy="20.3" r="2.4" fill="#e82000"/><circle cx="9.3" cy="28.3" r="2.4" fill="#30d020" stroke="#000" stroke-width="0.5"/><circle cx="27.1" cy="11.2" r="2.4" fill="#30d020" stroke="#000" stroke-width="0.5"/><path d="M22.0 15.5 L22.0 28.1 L25.2 25.4 L28.0 31.6 L30.7 30.4 L28.0 24.5 L32.4 24.5 Z" fill="#000" transform="rotate(-11 22 15.5)"/></svg></div>
<div style="left:1757px;top:485px;width:163px;height:3px;background:#2f7f6c;"></div>
<div style="left:1757px;top:488px;width:163px;height:174px;background:#000;border-left:2px solid #3f8f7c;"></div>
<div style="left:1757px;top:662px;width:163px;height:1px;background:#3f8f7c;"></div>
<div style="left:1757px;top:663px;width:163px;height:88px;background:#000;border-left:2px solid #3f8f7c;"></div>
<div style="left:1757px;top:751px;width:163px;height:1px;background:#3f8f7c;"></div>
<div style="left:1757px;top:752px;width:163px;height:177px;background:#000;border-left:2px solid #3f8f7c;"></div>
<div style="left:1917px;top:488px;width:3px;height:441px;background:#9be8d6;"></div>
<div style="left:1765px;top:665px;width:147px;height:84px;border:2px solid #fff;"></div>
<div style="left:1850px;top:715px;width:47px;height:26px;background:#ff0000;"></div>
<svg width="1920" height="1048"><path d="M1762 745 L1770 752 M1770 745 L1762 752" stroke="#fff" stroke-width="1"/></svg>
<div style="left:1757px;top:929px;width:163px;height:3px;background:#a6f0dc;"></div>
<div style="left:1757px;top:932px;width:163px;height:43px;background:#55c9ae;border-left:2px solid #a6f0dc;"></div>
<div style="left:719px;top:502px;width:896px;height:472px;border-radius:7px 7px 2px 2px;border:1px solid #101418;background:linear-gradient(90deg,#0c1014 0,#0a0d12 240px,#0e1a60 256px,#1830b0 275px,#1a34b8 400px,#14248a 412px,#24282c 428px,#262a2e 450px,#1c38b0 458px,#1c38b0 488px,#2c3034 496px,#303438 550px,#2e3236 740px,#2c3c90 752px,#3454d0 770px,#3454d0 795px,#3c4c98 812px,#50545c 826px,#484c52 896px);box-shadow:inset 0 0 0 1px rgba(255,255,255,0.55);"></div>
<div style="left:721px;top:504px;width:892px;height:26px;background:linear-gradient(180deg,rgba(255,255,255,0.10),rgba(0,0,0,0.18));"></div>
<div style="left:1300px;top:508px;width:140px;height:18px;background:radial-gradient(ellipse at 50% 50%,rgba(120,120,90,0.45),rgba(120,120,90,0) 70%);"></div>
<div style="left:905px;top:513px;width:40px;height:14px;background:radial-gradient(ellipse at 50% 50%,rgba(90,90,60,0.45),rgba(90,90,60,0) 70%);"></div>
<div style="left:720px;top:530px;width:894px;height:443px;background:#20262c;box-shadow:inset 1px 0 0 rgba(255,255,255,0.5),inset -1px 0 0 rgba(255,255,255,0.5),inset 0 -1px 0 rgba(255,255,255,0.45);"></div>
<div style="left:720px;top:508px;width:2px;height:462px;background:linear-gradient(180deg,rgba(255,255,255,0.95) 0,rgba(255,255,255,0.75) 125px,rgba(90,100,110,0.9) 135px,rgba(60,70,140,0.8) 300px,rgba(50,60,80,0.9) 100%);"></div>
<div style="left:722px;top:530px;width:3px;height:440px;background:#1c2026;"></div>
<div style="left:1612px;top:508px;width:2px;height:462px;background:linear-gradient(180deg,rgba(255,255,255,0.9) 0,rgba(220,220,220,0.7) 125px,rgba(90,100,110,0.9) 135px,rgba(60,70,140,0.8) 300px,rgba(50,60,80,0.9) 100%);"></div>
<div style="left:1609px;top:530px;width:3px;height:440px;background:linear-gradient(180deg,#7a8088 0,#5a6068 100px,#1c2026 115px,#1c2026 100%);"></div>
<div style="left:722px;top:504px;width:110px;height:25px;background:radial-gradient(ellipse at 40% 50%,rgba(255,255,255,0.85),rgba(255,255,255,0.55) 50%,rgba(255,255,255,0) 75%);"></div>
<div style="left:727px;top:509px;width:14px;height:14px;background:#fff;border:1px solid #222;border-top:3px solid #1a2a8a;"></div>
<svg width="1920" height="1048"><path d="M730 514.5 L738 520.5 M738 514 L730 520.5" stroke="#b8b800" stroke-width="2.4" fill="none"/><path d="M730 514.5 L738 520.5 M738 514 L730 520.5" stroke="#e4e428" stroke-width="1.2" fill="none"/></svg>
<div style="left:747px;top:507px;width:120px;height:18px;font-family:'Liberation Sans', sans-serif;font-size:12.3px;line-height:18px;color:#000;white-space:pre;">Popview - 1</div>
<div style="left:1562px;top:502px;width:48px;height:19px;border:1px solid rgba(255,255,255,0.7);border-top:none;border-radius:0 0 5px 5px;background:linear-gradient(180deg,#e8a8a0 0,#d06a60 45%,#b82a20 50%,#c8483c 100%);box-shadow:0 0 0 1px rgba(40,0,0,0.5);"></div>
<svg width="1920" height="1048"><path d="M1581 507 L1590 515 M1590 507 L1581 515" stroke="#5a1a1a" stroke-width="4.2" fill="none"/><path d="M1581 507 L1590 515 M1590 507 L1581 515" stroke="#fff" stroke-width="2.4" fill="none"/></svg>
<div style="left:724px;top:529px;width:886px;height:441px;background:#55c9ae;border-top:1px solid #b8c8c8;border-left:1px solid #b8c8c8;"></div>
<div style="left:725px;top:530px;width:846px;height:407px;background:#000;border-style:solid;border-width:3px 2px 2px 3px;border-color:#2c6a5a #9be8d6 #9be8d6 #2c6a5a;"></div>
<svg width="1920" height="1048"><defs><clipPath id="pv"><rect x="728.5" y="534.5" width="840" height="400.5"/></clipPath><clipPath id="pv2"><rect x="728.5" y="718" width="840" height="217"/></clipPath></defs><g clip-path="url(#pv)"><path d="M781 530 H815 V694 H997 Q1014 694 1014 711 Q1014 727.5 997 727.5 H795 Q781 727.5 781 713 Z" fill="#c39b08"/><path d="M1006 696.5 Q1014 699 1014 711 Q1014 723 1006 725.5 Z" fill="#4a9c00"/><rect x="1027" y="530" width="350" height="188" fill="#0020ff"/><circle cx="1072" cy="695" r="45.5" fill="#c39b08"/><circle cx="1072" cy="694.5" r="45.5" fill="#4db8ff"/><circle cx="1072" cy="694.5" r="45.5" fill="#429d00" clip-path="url(#pv2)"/><path d="M1570 751 H960 Q946.5 751 946.5 765 V940 H980 V785 H1570 Z" fill="#c39b08"/><path d="M1570 815 H1025 Q1018 815 1018 822 V940 H1570 Z" fill="#0020ff"/></g></svg>
<div class="pb" style="left:1573px;top:533px"><b></b><svg width="33" height="33" style="left:-1px;top:-1px"><rect x="10" y="14" width="8" height="8" stroke="#000" fill="none" stroke-width="1.8"/><rect x="19.5" y="9.5" width="4.5" height="4.5" stroke="#000" fill="none" stroke-width="1"/><path d="M11.5 18 H16 M13.5 16 L11.5 18 L13.5 20" stroke="#000" fill="none" stroke-width="1"/></svg></div>
<div class="pb" style="left:1573px;top:568px"><b></b><svg width="33" height="33" style="left:-1px;top:-1px"><path d="M13.5 15 H10.5 V23 H23 V15 H20" stroke="#000" fill="none" stroke-width="2.2"/><path d="M16.8 8 L21.8 13 H19.2 V18.5 H14.4 V13 H11.8 Z" fill="#000"/></svg></div>
<div class="pb" style="left:1573px;top:603px"><b></b><svg width="33" height="33" style="left:-1px;top:-1px"><path d="M13.5 18.5 H10.5 V10.5 H23 V18.5 H20" stroke="#000" fill="none" stroke-width="2.2"/><path d="M16.8 25.5 L21.8 20.5 H19.2 V15 H14.4 V20.5 H11.8 Z" fill="#000"/></svg></div>
<div class="pb" style="left:1573px;top:638px"><b></b><svg width="33" height="33" style="left:-1px;top:-1px"><path d="M15.5 13 V10.5 H23.5 V23.5 H15.5 V21" stroke="#000" fill="none" stroke-width="2.2"/><path d="M8 16.8 L13 11.8 V14.4 H18.5 V19.2 H13 V21.8 Z" fill="#000"/></svg></div>
<div class="pb" style="left:1573px;top:673px"><b></b><svg width="33" height="33" style="left:-1px;top:-1px"><path d="M18 13 V10.5 H10 V23.5 H18 V21" stroke="#000" fill="none" stroke-width="2.2"/><path d="M25.5 16.8 L20.5 11.8 V14.4 H15 V19.2 H20.5 V21.8 Z" fill="#000"/></svg></div>
<div class="pb" style="left:1573px;top:708px"><b></b><svg width="33" height="33" style="left:-1px;top:-1px"><rect x="14.3" y="14.3" width="5" height="5" stroke="#000" fill="none" stroke-width="1.5"/><path d="M8 8 L13.5 9.5 L9.5 13.5 Z M25.5 8 L20 9.5 L24 13.5 Z M8 25.5 L13.5 24 L9.5 20 Z M25.5 25.5 L20 24 L24 20 Z" fill="#000"/><path d="M13.3 8 H20.3 L16.8 12.3 Z M13.3 25.5 H20.3 L16.8 21.2 Z M8 13.3 V20.3 L12.3 16.8 Z M25.5 13.3 V20.3 L21.2 16.8 Z" fill="#000"/></svg></div>
<div class="pb" style="left:1573px;top:743px"><b></b><svg width="33" height="33" style="left:-1px;top:-1px"><rect x="14.3" y="14.3" width="5" height="5" stroke="#000" fill="none" stroke-width="1.3"/><path d="M16.8 8 L20.6 12.2 H13 Z M16.8 25.5 L20.6 21.3 H13 Z M8 16.8 L12.2 13 V20.6 Z M25.5 16.8 L21.3 13 V20.6 Z" fill="#000"/></svg></div>
<div style="left:1571px;top:531px;width:2px;height:406px;background:#9be8d6;"></div>
<div style="left:1606px;top:531px;width:2px;height:406px;background:#2c6a5a;"></div>
<div style="left:725px;top:937px;width:884px;height:3px;background:#c4f4ec;"></div>
<div style="left:727px;top:940px;width:881px;height:27px;background:#9edbdb;border-style:solid;border-width:2px;border-color:#d4f4f4 #3f8f80 #3f8f80 #d4f4f4;"></div>
<div class="m" style="left:727px;top:946.5px;width:881px;height:16px;font-size:14px;line-height:16px;letter-spacing:0.4px;text-align:center;">Close</div>
<div style="left:0px;top:974px;width:1920px;height:34px;background:#ffffd0;border-top:2px solid #000;"></div>
<div style="left:0px;top:1006.6px;width:1920px;height:1.7px;background:#000;"></div>
<div style="left:0px;top:1008.3px;width:1920px;height:3px;background:#6f8f8f;"></div>
<div style="left:2px;top:977px;width:29px;height:29px;background:#ffffd0;border-style:solid;border-width:2px;border-color:#ffffee #8a8a60 #8a8a60 #ffffee;"></div>
<div style="left:33px;top:977px;width:29px;height:29px;background:#ffffd0;border-style:solid;border-width:2px;border-color:#ffffee #8a8a60 #8a8a60 #ffffee;"></div>
<div style="left:64px;top:976px;width:30px;height:31px;background:#55c9ae;border:1px solid #2a6b5a;"></div>
<div style="left:67px;top:979px;width:24px;height:25px;background:#ffffd0;border-style:solid;border-width:2px;border-color:#a6f0dc #2a7b66 #2a7b66 #a6f0dc;"></div>
<div class="m" style="left:98px;top:983px;width:50px;height:16px;font-size:13px;line-height:16px;letter-spacing:-0.8px;">X Y :</div>
<div style="left:145px;top:978px;width:172px;height:27px;background:#ffffd0;border-style:solid;border-width:2px;border-color:#8a8a60 #ffffee #ffffee #8a8a60;"></div>
<div style="left:318px;top:976px;width:29px;height:31px;background:#55c9ae;border:1px solid #2a6b5a;"></div>
<div style="left:321px;top:979px;width:23px;height:25px;background:#ffffd0;border-style:solid;border-width:2px;border-color:#a6f0dc #2a7b66 #2a7b66 #a6f0dc;"></div>
<div style="left:347px;top:976px;width:2px;height:31px;background:#333;"></div>
<svg width="1920" height="1048" style="left:0;top:0"><rect x="8.5" y="983.5" width="16" height="16" fill="none" stroke="#000" stroke-width="1"/><path d="M10 985 L22 997 M22 997 L22 992 M22 997 L17 997" stroke="#000" stroke-width="1.2" fill="none"/><rect x="39.5" y="983.5" width="16" height="16" fill="none" stroke="#000" stroke-width="1"/><path d="M40 999 L54 985 M40 999 H55 M46 985 V991" stroke="#000" stroke-width="1.2" fill="none"/><text x="47" y="998" font-size="6" font-family="Liberation Sans" fill="#000">oc</text><rect x="72.5" y="984.5" width="13" height="14" rx="2" fill="none" stroke="#000" stroke-width="1.2"/><path d="M79 985 V998 M73 991.5 H85" stroke="#000" stroke-width="1.2"/><rect x="325.5" y="984.5" width="13" height="14" fill="none" stroke="#000" stroke-width="1.2"/><path d="M332 987 V993 M332 995 V996.6" stroke="#000" stroke-width="1.8"/><path d="M152.5 981 V994 M151 981 H154 M151 994 H154" stroke="#333" stroke-width="0.8" stroke-dasharray="1 1"/></svg>
<div class="m" style="left:352px;top:983px;width:400px;height:16px;font-size:13px;line-height:16px;letter-spacing:-0.8px;">&lt;M1&gt; - Select first area corner</div>
<div style="left:1839px;top:976px;width:2px;height:31px;background:#1a1a1a;"></div>
<div style="left:1841px;top:976px;width:79px;height:31px;background:#55c9ae;"></div>
<div style="left:1845px;top:978px;width:72px;height:27px;background:#55c9ae;border-style:solid;border-width:2px;border-color:#a6f0dc #2a7b66 #2a7b66 #a6f0dc;"></div>
<div style="left:1854px;top:983px;width:44px;height:18px;font-family:'Liberation Serif', serif;font-weight:bold;font-size:14px;letter-spacing:0.4px;line-height:18px;color:#000;transform:scaleX(1.28);transform-origin:0 0;">Inch</div>
<div style="left:1897px;top:988px;width:13px;height:7px;background:#55c9ae;border-style:solid;border-width:2px;border-color:#a6f0dc #2a7b66 #2a7b66 #a6f0dc;"></div>
<div style="left:0px;top:1011px;width:1920px;height:27px;background:#b0ffff;border-left:2px solid #3c7c7c;"></div>
<div style="left:0px;top:1011px;width:1920px;height:2px;background:#98dede;"></div>
<div style="left:0px;top:1033px;width:1920px;height:1px;background:#5a9a9a;"></div>
<div style="left:0px;top:1034px;width:1920px;height:3px;background:#c4ffff;"></div>
<div style="left:0px;top:1037px;width:1920px;height:1px;background:#000;"></div>
<div style="left:0px;top:1038px;width:1920px;height:2px;background:#c8f0f0;"></div>
<div class="m" style="left:0px;top:1015px;width:1920px;height:16px;font-size:13px;line-height:16px;letter-spacing:-0.8px;text-align:center;">7<span style="font-family:'Liberation Sans';letter-spacing:-0.25px">0</span>944 r4 Lines were selected</div>
<div style="left:0px;top:1040px;width:1920px;height:8px;background:linear-gradient(180deg,#10151a,#3a444c);"></div>
<div style="left:78px;top:1041px;width:128px;height:8px;background:linear-gradient(180deg,#8a929a,#5a636b);border-radius:3px 3px 0 0;border:1px solid #aab2ba;border-bottom:none;"></div>
<div style="left:210px;top:1041px;width:130px;height:8px;background:linear-gradient(180deg,#8a929a,#5a636b);border-radius:3px 3px 0 0;border:1px solid #aab2ba;border-bottom:none;"></div>
<div style="left:345px;top:1041px;width:130px;height:8px;background:linear-gradient(180deg,#8a929a,#5a636b);border-radius:3px 3px 0 0;border:1px solid #aab2ba;border-bottom:none;"></div>
<div style="left:479px;top:1041px;width:130px;height:8px;background:linear-gradient(180deg,#8a929a,#5a636b);border-radius:3px 3px 0 0;border:1px solid #aab2ba;border-bottom:none;"></div>
<div style="left:613px;top:1041px;width:130px;height:8px;background:linear-gradient(180deg,#8a929a,#5a636b);border-radius:3px 3px 0 0;border:1px solid #aab2ba;border-bottom:none;"></div>
<div style="left:746px;top:1041px;width:130px;height:8px;background:linear-gradient(180deg,#8a929a,#5a636b);border-radius:3px 3px 0 0;border:1px solid #aab2ba;border-bottom:none;"></div>
<div style="left:880px;top:1041px;width:130px;height:8px;background:linear-gradient(180deg,#8a929a,#5a636b);border-radius:3px 3px 0 0;border:1px solid #aab2ba;border-bottom:none;"></div>
<div style="left:1013px;top:1041px;width:130px;height:8px;background:linear-gradient(180deg,#8a929a,#5a636b);border-radius:3px 3px 0 0;border:1px solid #aab2ba;border-bottom:none;"></div>
<div style="left:1147px;top:1041px;width:130px;height:8px;background:linear-gradient(180deg,#8a929a,#5a636b);border-radius:3px 3px 0 0;border:1px solid #aab2ba;border-bottom:none;"></div>
<div style="left:1280px;top:1041px;width:130px;height:8px;background:linear-gradient(180deg,#8a929a,#5a636b);border-radius:3px 3px 0 0;border:1px solid #aab2ba;border-bottom:none;"></div>
<div style="left:1413px;top:1041px;width:125px;height:8px;background:linear-gradient(180deg,#8a929a,#5a636b);border-radius:3px 3px 0 0;border:1px solid #aab2ba;border-bottom:none;"></div>
<div style="left:10px;top:1040px;width:34px;height:20px;background:radial-gradient(circle at 50% 60%,#9ab8d8,#3a5a80);border-radius:50%;border:1px solid #c0d0e0;"></div>
<div style="left:222px;top:1043px;width:30px;height:6px;background:#1a3ac0;border-radius:2px 6px 0 0;"></div>
<div style="left:376px;top:1044px;width:6px;height:5px;background:#e02020;"></div>
<div style="left:492px;top:1043px;width:20px;height:3px;background:#20a040;"></div>
<div style="left:1900.5px;top:992px;width:45px;height:45px;background:radial-gradient(circle at 40% 35%,#8fe08a,#2fa53a 60%,#1c7a28);border-radius:50%;border:2px solid #d8f4d8;"></div>
<div style="left:1907px;top:1007px;width:20px;height:14px;font-family:'Liberation Sans', sans-serif;font-weight:bold;font-size:12px;color:#fff;line-height:14px;">38</div>
</body></html>
